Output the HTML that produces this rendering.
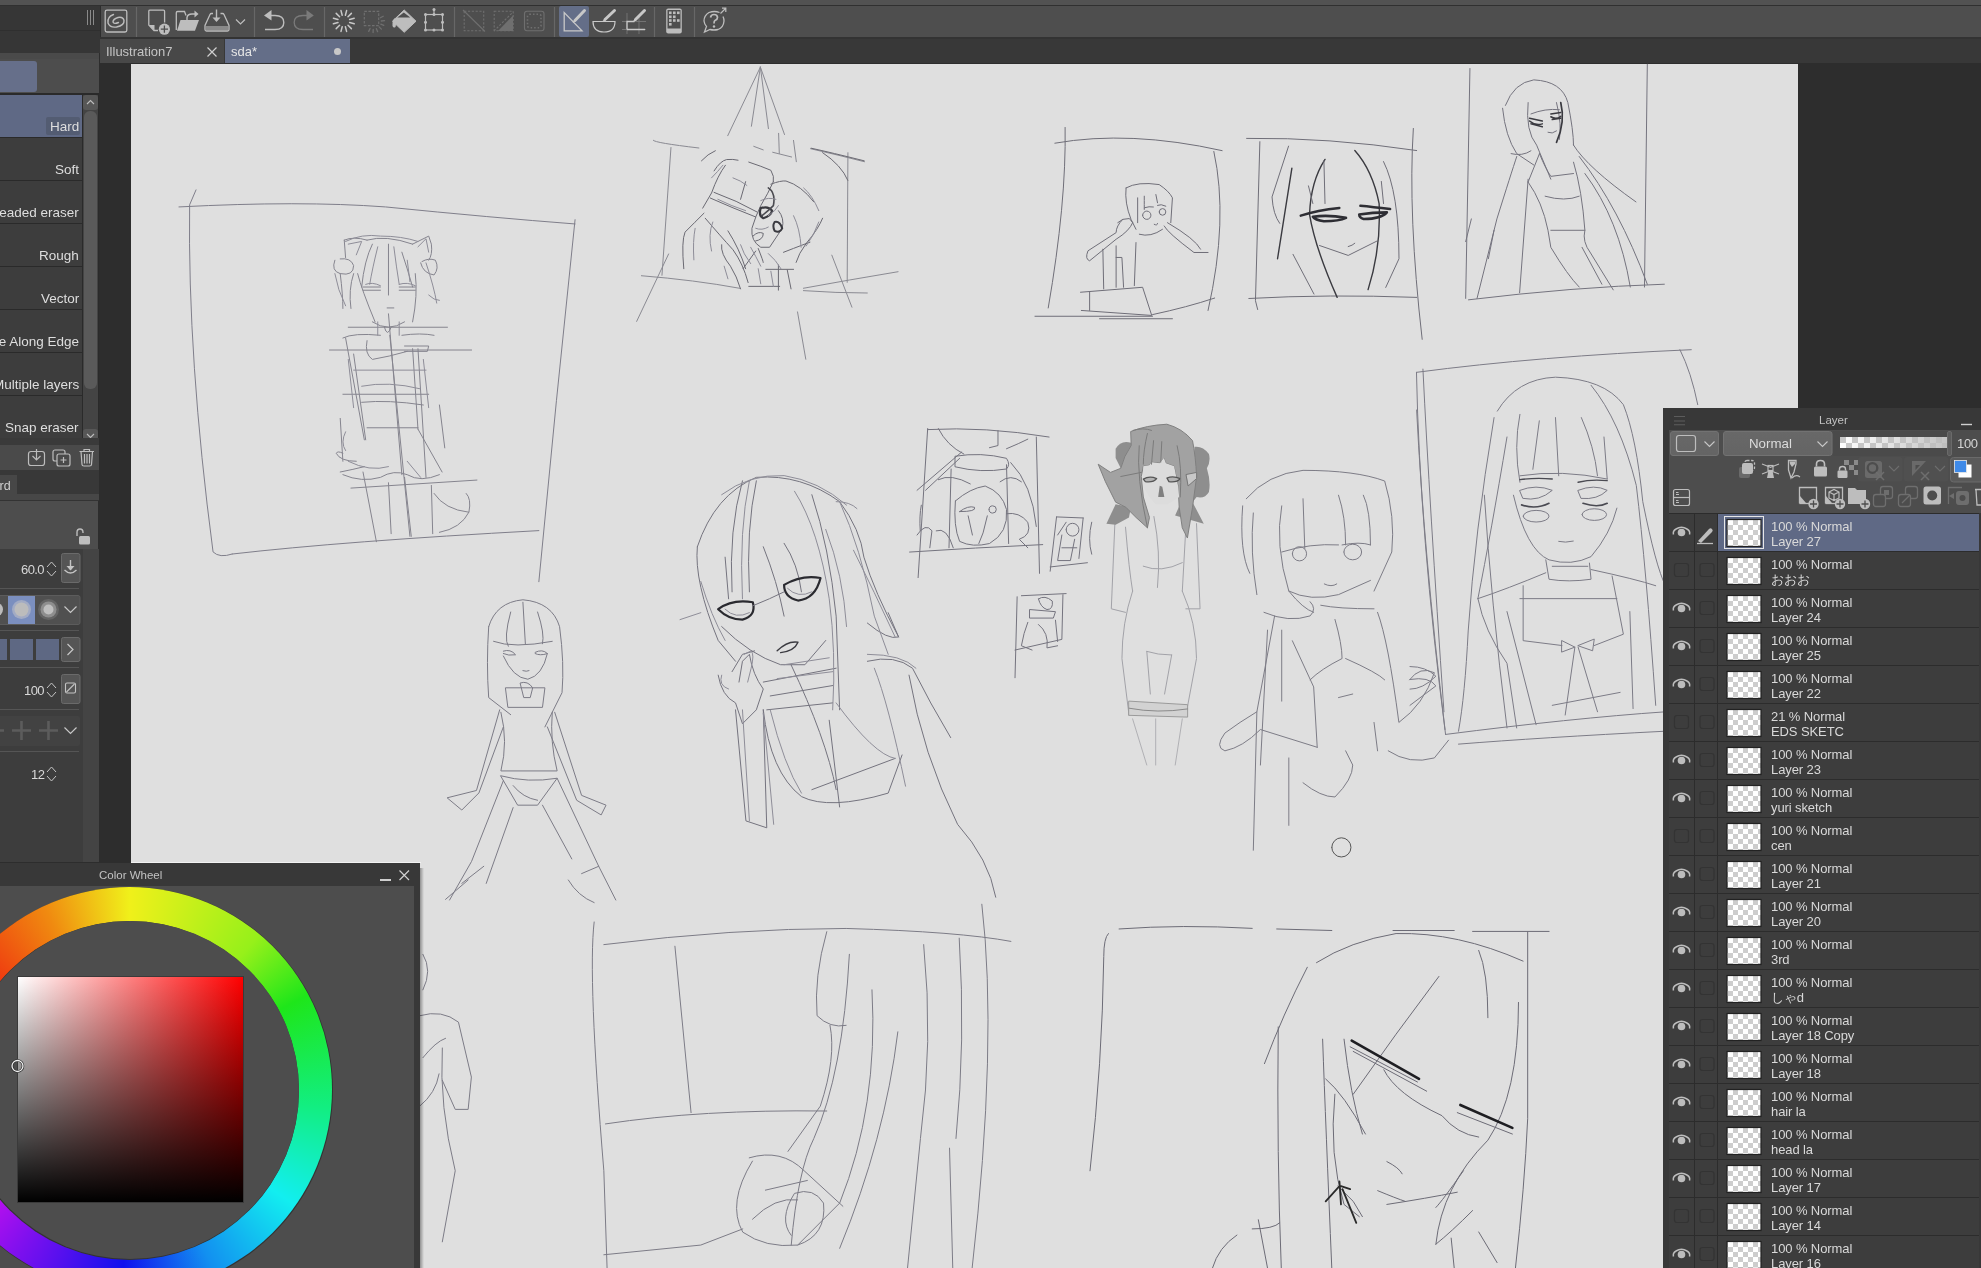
<!DOCTYPE html>
<html><head><meta charset="utf-8">
<style>
*{margin:0;padding:0;box-sizing:border-box}
html,body{width:1981px;height:1268px;overflow:hidden;background:#2d2d2d;font-family:"Liberation Sans",sans-serif;position:relative}
.a{position:absolute}
.t{position:absolute;white-space:nowrap;color:#cfcfcf;font-size:13px;line-height:15px;will-change:transform}
svg{position:absolute;overflow:visible}
</style></head><body>

<!-- top strip -->
<div class="a" style="left:0;top:0;width:1981px;height:6px;background:#525252"></div>
<div class="a" style="left:0;top:5px;width:1981px;height:1px;background:#303030"></div>
<!-- left top area -->
<div class="a" style="left:0;top:6px;width:100px;height:24px;background:#363636"></div>
<div class="a" style="left:0;top:30px;width:100px;height:1px;background:#2f2f2f"></div>
<div class="a" style="left:0;top:31px;width:100px;height:22px;background:#363636"></div>
<div class="a" style="left:0;top:53px;width:99px;height:6px;background:#4a4a4a"></div>
<div class="a" style="left:87px;top:10px;width:1px;height:15px;background:#8a8a8a"></div>
<div class="a" style="left:90px;top:10px;width:1px;height:15px;background:#8a8a8a"></div>
<div class="a" style="left:93px;top:10px;width:1px;height:15px;background:#8a8a8a"></div>
<!-- main toolbar -->
<div class="a" style="left:101px;top:6px;width:1880px;height:31px;background:#4e4e4e"></div>
<div class="a" style="left:100px;top:37px;width:1881px;height:2px;background:#333"></div>
<!-- tab row -->
<div class="a" style="left:100px;top:39px;width:1881px;height:24px;background:#383838"></div>
<div class="a" style="left:100px;top:39px;width:124px;height:24px;background:#484848"></div>
<div class="t" style="left:106px;top:43.5px;font-size:13px;color:#c4c4c4">Illustration7</div>
<svg style="left:205px;top:45px" width="14" height="14"><path d="M2.5 2.5 L11.5 11.5 M11.5 2.5 L2.5 11.5" stroke="#cfcfcf" stroke-width="1.2"/></svg>
<div class="a" style="left:225px;top:39px;width:125px;height:24px;background:#646e88"></div>
<div class="t" style="left:231px;top:43.5px;font-size:13px;color:#e6e6e6">sda*</div>
<div class="a" style="left:334px;top:48px;width:7px;height:7px;border-radius:50%;background:#c8c8c8"></div>


<!-- toolbar icons -->
<svg style="left:0;top:0" width="760" height="40">
 <g stroke="#676767" stroke-width="1.2"><path d="M136.5 7 V37 M254.5 7 V37 M324.5 7 V37 M454.5 7 V37 M554.5 7 V37 M654.5 7 V37 M694.5 7 V37"/></g>
 <rect x="105.2" y="10.2" width="21.6" height="21.8" rx="1.8" fill="none" stroke="#bdbdbd" stroke-width="1.3"/>
 <path d="M113.5 14.5 Q107 17 108 23 Q110 28 116.5 27 Q124.5 25.5 124 20.5 Q123 16.5 118 17.5 Q113 19 113 22 Q114 24.5 118.5 22.5" fill="none" stroke="#bdbdbd" stroke-width="1.4" stroke-linecap="round"/>
 <path d="M148.8 11 Q148.8 10.2 150 10.2 H163.5 Q164.6 10.2 164.6 11.5 V22.5 M148.8 11 V25 L154 30.5 H158" fill="none" stroke="#bdbdbd" stroke-width="1.3"/>
 <path d="M149 25 L154.5 30.5 V25 Z" fill="#bdbdbd"/>
 <circle cx="164.4" cy="29.2" r="5.6" fill="#bdbdbd"/>
 <path d="M164.4 25.6 V32.8 M160.8 29.2 H168" stroke="#4e4e4e" stroke-width="1.3"/>
 <path d="M186 15.5 L184.5 11.5 H177.5 Q176.3 11.5 176.3 12.8 V30" fill="none" stroke="#bdbdbd" stroke-width="1.3"/>
 <path d="M177 30.8 L180.5 20 H199 L195 30.8 Z" fill="#bdbdbd"/>
 <path d="M187 20 V17.5 Q187.5 14 192 14 H195" fill="none" stroke="#bdbdbd" stroke-width="1.4"/>
 <path d="M194.5 10.5 L198.5 14 L194.5 17.5 Z" fill="#bdbdbd"/>
 <path d="M213 13.5 H211.5 Q210.5 13.5 210 14.5 L205 25.5 V29.5 Q205 31 206.5 31 H227.5 Q229 31 229 29.5 V25.5 L224 14.5 Q223.5 13.5 222.5 13.5 H220.5" fill="none" stroke="#bdbdbd" stroke-width="1.3"/>
 <rect x="206" y="26" width="22" height="4" fill="#8a8a8a"/>
 <path d="M216.5 9.5 V21" stroke="#bdbdbd" stroke-width="1.4"/>
 <path d="M212.5 17.5 L216.5 22 L220.5 17.5 Z" fill="#bdbdbd"/>
 <path d="M236 19.5 L240.5 24 L245 19.5" fill="none" stroke="#bdbdbd" stroke-width="1.2"/>
 <path d="M264 15.5 L271.5 10 V20.5 Z" fill="#bdbdbd"/>
 <path d="M270.5 15.5 H275 Q283.8 15.5 283.8 22.5 Q283.8 29.5 275 29.5 H265" fill="none" stroke="#bdbdbd" stroke-width="1.4"/>
 <path d="M313.8 15.5 L306.5 10 V20.5 Z" fill="#7a7a7a"/>
 <path d="M307.5 15.5 H303 Q294.2 15.5 294.2 22.5 Q294.2 29.5 303 29.5 H313" fill="none" stroke="#7a7a7a" stroke-width="1.3"/>
 <path d="M345.4 15.2 L346.6 10.6 M348.0 16.8 L351.4 13.4 M349.6 19.4 L354.2 18.2 M349.6 22.6 L354.2 23.8 M348.0 25.2 L351.4 28.6 M345.4 26.8 L346.6 31.4 M342.2 26.8 L341.0 31.4 M339.6 25.2 L336.2 28.6 M338.0 22.6 L333.4 23.8 M338.0 19.4 L333.4 18.2 M339.6 16.8 L336.2 13.4 M342.2 15.2 L341.0 10.6 " stroke="#c8c8c8" stroke-width="1.5" stroke-linecap="round"/>
 <rect x="364.3" y="11.3" width="14.4" height="14.3" fill="none" stroke="#6f6f6f" stroke-width="1.2" stroke-dasharray="2.6 1.5"/>
 <path d="M380.4 17.8 L383.2 16.3 M381.3 21.0 L384.5 20.7 M380.8 24.2 L383.8 25.3 M379.1 26.9 L381.4 29.1 M376.4 28.7 L377.6 31.7 M373.2 29.3 L373.1 32.5 M370.1 28.5 L368.7 31.4 " stroke="#6f6f6f" stroke-width="1.3" stroke-linecap="round"/>
 <path d="M404.2 10 L416 21.2 L404.2 32.3 L392.5 21.2 Z" fill="#bdbdbd" stroke="#bdbdbd" stroke-width="1" stroke-linejoin="round"/>
 <path d="M403.8 12.4 L397.3 17.6 H410.3 Z" fill="#4e4e4e"/>
 <path d="M395 18 Q392 20 392.5 26 Q393.5 28.5 395.5 27 Q396 25 396.5 22 Z" fill="#bdbdbd"/>
 <rect x="425.5" y="14.5" width="17" height="15.5" fill="none" stroke="#bdbdbd" stroke-width="1.2"/>
 <path d="M434 14.5 V9.5" stroke="#bdbdbd" stroke-width="1.2"/>
 <g fill="#bdbdbd"><circle cx="425.5" cy="14.5" r="1.5"/><circle cx="442.5" cy="14.5" r="1.5"/><circle cx="425.5" cy="30" r="1.5"/><circle cx="442.5" cy="30" r="1.5"/><circle cx="434" cy="14.5" r="1.5"/><circle cx="434" cy="30" r="1.5"/><circle cx="425.5" cy="22.2" r="1.5"/><circle cx="442.5" cy="22.2" r="1.5"/><circle cx="434" cy="9.5" r="1.5"/></g>
 <g stroke="#6f6f6f" stroke-width="1.1" fill="none">
  <rect x="464.2" y="11.3" width="19.5" height="19.5" stroke-dasharray="2.2 1.6"/>
  <path d="M463 10 L485 31.5" stroke-dasharray="none"/>
  <rect x="494.2" y="11.3" width="19" height="19.5" stroke-dasharray="2.2 1.6"/>
  <path d="M494 31 L513 12" stroke-dasharray="2.2 1.6"/>
  <rect x="524.5" y="11.2" width="19.5" height="19.5" rx="2.5"/>
  <rect x="527.5" y="14.2" width="13.5" height="13.5" rx="2" stroke-width="1.6" stroke-dasharray="1.5 2"/>
 </g>
 <path d="M498 31 L513 15.5 V31 Z" fill="#6f6f6f"/>
 <rect x="559" y="6" width="30" height="31" rx="2" fill="#646e88"/>
 <path d="M564.2 12.5 V30.8 H582 Z" fill="none" stroke="#c8c8c8" stroke-width="1.3"/>
 <path d="M575 20.5 L584.5 10.5" stroke="#c8c8c8" stroke-width="3" stroke-linecap="round"/>
 <path d="M575.5 20 L573 22.5" stroke="#c8c8c8" stroke-width="1.2"/>
 <path d="M593 21.5 H615 Q615 32 604 32 Q593 32 593 21.5 Z" fill="none" stroke="#c8c8c8" stroke-width="1.2"/>
 <path d="M605 19.5 L614.5 10.5" stroke="#c8c8c8" stroke-width="3" stroke-linecap="round"/>
 <path d="M605.5 19 L603 21.5" stroke="#c8c8c8" stroke-width="1.2"/>
 <path d="M622 21.5 H646 M622 29.5 H646 M627 13 V34 M639 16 V34" stroke="#777" stroke-width="0.9"/>
 <path d="M627 29.5 V21.5 H634.5 M627 29.5 H645" fill="none" stroke="#c8c8c8" stroke-width="1.3"/>
 <path d="M635.5 19.5 L644.5 10.5" stroke="#c8c8c8" stroke-width="3" stroke-linecap="round"/>
 <path d="M636 19 L633.5 21.5" stroke="#c8c8c8" stroke-width="1.2"/>
 <rect x="666.2" y="8.4" width="15.6" height="25.2" rx="2" fill="#bdbdbd"/>
 <rect x="667.5" y="10" width="13" height="18.5" fill="#4e4e4e"/>
 <g fill="#bdbdbd"><rect x="669" y="11.5" width="2.6" height="2.6"/><rect x="673" y="11.5" width="2.6" height="2.6"/><rect x="677" y="11.5" width="2.6" height="2.6"/><rect x="669" y="15.5" width="2.6" height="2.6"/><rect x="673" y="15.5" width="2.6" height="2.6"/><rect x="669" y="19.2" width="2.6" height="2.6"/><rect x="673" y="19.2" width="2.6" height="2.6"/><rect x="677" y="19.2" width="2.6" height="2.6"/><rect x="669" y="23" width="2.6" height="2.6"/></g>
 <path d="M719.5 12.5 Q714.5 10.5 709 12.5 Q704 15.5 704 21 Q704.5 24.5 706.5 26.5 L704.5 32 L710 29.5 Q714 30.5 718 29.5 Q723.5 27.5 724 21 Q724 18.5 723 16.5" fill="none" stroke="#bdbdbd" stroke-width="1.3"/>
 <path d="M720.5 13.5 L725.5 8.5 M722 8.2 H725.8 V12" fill="none" stroke="#bdbdbd" stroke-width="1.2"/>
 <path d="M710.5 17.5 Q711 14.5 714 14.5 Q717.5 14.5 717.5 17.5 Q717.5 19.5 715 20.5 Q714 21 714 23.5" fill="none" stroke="#bdbdbd" stroke-width="1.7"/>
 <circle cx="714" cy="26.5" r="1.2" fill="#bdbdbd"/>
</svg>

<!-- canvas -->
<div class="a" id="canvas" style="left:131px;top:64px;width:1667px;height:1204px;background:#dfdfdf"></div>

<!-- sketches -->
<svg style="left:0;top:0" width="1981" height="1268" id="sk">
<g transform="translate(130,60) scale(0.42589)" fill="none" stroke="#7e7d8a" stroke-width="1.0" stroke-linecap="round" stroke-linejoin="round">
<path d="M115,345 Q400,330 600,345 Q850,370 1045,385" vector-effect="non-scaling-stroke"/>
<path d="M155,305 L140,340 Q135,700 195,1155 Q210,1170 240,1160" vector-effect="non-scaling-stroke"/>
<path d="M240,1160 Q500,1130 960,1105" vector-effect="non-scaling-stroke"/>
<path d="M1045,375 Q1000,800 960,1225" vector-effect="non-scaling-stroke"/>
</g>
<g transform="translate(300,220) scale(0.26810)" fill="none" stroke="#85848e" stroke-width="1.0" stroke-linecap="round" stroke-linejoin="round">
<path d="M165,75 Q200,60 250,75" vector-effect="non-scaling-stroke"/>
<path d="M165,75 L170,140" vector-effect="non-scaling-stroke"/>
<path d="M250,75 Q320,55 420,90" vector-effect="non-scaling-stroke"/>
<path d="M420,90 L480,60 L490,90 Q495,130 480,150" vector-effect="non-scaling-stroke"/>
<path d="M130,150 Q115,190 150,200 Q200,210 200,170 Q190,140 150,145" vector-effect="non-scaling-stroke"/>
<path d="M450,160 Q460,200 500,205 Q520,180 505,150 Q480,140 455,155" vector-effect="non-scaling-stroke"/>
<path d="M200,200 Q180,260 190,330" vector-effect="non-scaling-stroke"/>
<path d="M150,200 Q160,280 160,330" vector-effect="non-scaling-stroke"/>
<path d="M215,200 Q230,260 280,380" vector-effect="non-scaling-stroke"/>
<path d="M430,200 Q440,280 420,380" vector-effect="non-scaling-stroke"/>
<path d="M270,90 Q240,150 230,250" vector-effect="non-scaling-stroke"/>
<path d="M330,90 L330,280" vector-effect="non-scaling-stroke"/>
<path d="M380,120 Q400,180 420,250" vector-effect="non-scaling-stroke"/>
<path d="M235,250 H300" vector-effect="non-scaling-stroke"/>
<path d="M370,250 H430" vector-effect="non-scaling-stroke"/>
<path d="M235,262 L300,262" vector-effect="non-scaling-stroke"/>
<path d="M370,262 L430,262" vector-effect="non-scaling-stroke"/>
<path d="M325,328 H350" vector-effect="non-scaling-stroke"/>
<path d="M270,380 Q330,420 390,380" vector-effect="non-scaling-stroke"/>
<path d="M315,400 Q325,440 340,400" vector-effect="non-scaling-stroke"/>
<path d="M160,440 Q200,420 300,430" vector-effect="non-scaling-stroke"/>
<path d="M380,430 Q450,420 500,430" vector-effect="non-scaling-stroke"/>
<path d="M110,485 H640" vector-effect="non-scaling-stroke"/>
<path d="M160,650 H480" vector-effect="non-scaling-stroke"/>
<path d="M230,680 Q330,670 460,690" vector-effect="non-scaling-stroke"/>
<path d="M250,775 H440" vector-effect="non-scaling-stroke"/>
<path d="M180,400 H550" vector-effect="non-scaling-stroke"/>
<path d="M170,440 L240,820" vector-effect="non-scaling-stroke"/>
<path d="M440,480 L470,960" vector-effect="non-scaling-stroke"/>
<path d="M200,500 L245,820" vector-effect="non-scaling-stroke"/>
<path d="M420,480 L440,780" vector-effect="non-scaling-stroke"/>
<path d="M330,350 L380,950" vector-effect="non-scaling-stroke"/>
<path d="M335,430 L410,1180" vector-effect="non-scaling-stroke"/>
<path d="M250,450 Q240,500 270,520 Q330,510 400,490" vector-effect="non-scaling-stroke"/>
<path d="M390,470 H480 L475,490 H390" vector-effect="non-scaling-stroke"/>
<path d="M160,870 Q140,860 135,870 Q150,900 210,900" vector-effect="non-scaling-stroke"/>
<path d="M150,940 Q200,930 240,920" vector-effect="non-scaling-stroke"/>
<path d="M160,950 Q230,980 300,960 Q350,930 400,950 Q450,980 520,950" vector-effect="non-scaling-stroke"/>
<path d="M150,740 L160,900" vector-effect="non-scaling-stroke"/>
<path d="M440,780 L530,940" vector-effect="non-scaling-stroke"/>
<path d="M520,690 L540,850" vector-effect="non-scaling-stroke"/>
<path d="M190,1000 L660,970" vector-effect="non-scaling-stroke"/>
<path d="M235,940 L285,1200" vector-effect="non-scaling-stroke"/>
<path d="M330,980 L340,1170" vector-effect="non-scaling-stroke"/>
<path d="M390,960 L415,1180" vector-effect="non-scaling-stroke"/>
<path d="M490,990 L495,1170" vector-effect="non-scaling-stroke"/>
<path d="M500,1020 Q540,1080 630,1090 Q640,1040 620,1020" vector-effect="non-scaling-stroke"/>
<path d="M630,1090 Q600,1150 520,1165" vector-effect="non-scaling-stroke"/>
</g>
<g transform="translate(600,60) scale(0.23655)" fill="none" stroke="#8a8a92" stroke-width="1.0" stroke-linecap="round" stroke-linejoin="round">
<path d="M678,30 L540,320" vector-effect="non-scaling-stroke"/>
<path d="M678,30 L640,280" vector-effect="non-scaling-stroke"/>
<path d="M678,30 L712,290" vector-effect="non-scaling-stroke"/>
<path d="M678,30 L780,315" vector-effect="non-scaling-stroke"/>
<path d="M225,340 Q230,350 418,372" vector-effect="non-scaling-stroke"/>
<path d="M300,370 L262,910" vector-effect="non-scaling-stroke"/>
<path d="M175,912 Q400,930 590,965" vector-effect="non-scaling-stroke"/>
<path d="M1048,392 L1045,940" vector-effect="non-scaling-stroke"/>
<path d="M890,375 Q1000,400 1118,430" vector-effect="non-scaling-stroke"/>
<path d="M860,965 Q1050,930 1260,895" vector-effect="non-scaling-stroke"/>
<path d="M860,975 Q1000,985 1130,985" vector-effect="non-scaling-stroke"/>
<path d="M290,820 L155,1105" vector-effect="non-scaling-stroke"/>
<path d="M980,825 L1065,1045" vector-effect="non-scaling-stroke"/>
<path d="M835,1065 L870,1265" vector-effect="non-scaling-stroke"/>
<path d="M650,365 L690,380" vector-effect="non-scaling-stroke"/>
<path d="M730,390 L810,410" vector-effect="non-scaling-stroke"/>
<path d="M755,310 L758,395" vector-effect="non-scaling-stroke"/>
<path d="M818,340 L830,430" vector-effect="non-scaling-stroke"/>
</g>
<g transform="translate(680,140) scale(0.12618)" fill="none" stroke="#6a6972" stroke-width="1.0" stroke-linecap="round" stroke-linejoin="round">
<path d="M170,165 Q220,110 280,85" vector-effect="non-scaling-stroke"/>
<path d="M270,245 Q320,165 370,155 Q420,150 460,160" vector-effect="non-scaling-stroke"/>
<path d="M360,200 Q300,280 250,420 L180,540" vector-effect="non-scaling-stroke"/>
<path d="M545,175 Q650,210 720,240 Q750,290 740,330" vector-effect="non-scaling-stroke"/>
<path d="M270,415 Q450,480 610,570" vector-effect="non-scaling-stroke"/>
<path d="M240,460 Q420,540 600,610" vector-effect="non-scaling-stroke"/>
<path d="M520,330 L480,470" vector-effect="non-scaling-stroke"/>
<path d="M740,330 Q700,420 640,520 Q600,600 570,700 Q560,800 640,850 L710,850 L810,700 Q830,620 780,560" vector-effect="non-scaling-stroke"/>
<path d="M720,350 Q800,320 840,325 Q960,360 1060,490" vector-effect="non-scaling-stroke"/>
<path d="M640,540 Q700,520 730,560 Q720,600 660,620 Q620,600 640,540" stroke-width="2.2" stroke="#3a3a40" vector-effect="non-scaling-stroke"/>
<path d="M750,650 Q790,640 810,700 Q790,740 750,720 Q730,680 750,650" stroke-width="2" stroke="#3a3a40" vector-effect="non-scaling-stroke"/>
<path d="M700,380 Q760,420 740,520 Q700,560 650,600" stroke-width="1.6" stroke="#4a4a50" vector-effect="non-scaling-stroke"/>
<path d="M580,760 Q620,720 660,740 Q660,790 600,800" vector-effect="non-scaling-stroke"/>
<path d="M620,860 Q660,960 660,970" vector-effect="non-scaling-stroke"/>
<path d="M820,890 Q1000,820 1030,810" vector-effect="non-scaling-stroke"/>
<path d="M1130,620 Q1100,700 1000,820 Q940,900 920,970" vector-effect="non-scaling-stroke"/>
<path d="M190,580 Q120,650 40,730 Q10,800 30,1020" vector-effect="non-scaling-stroke"/>
<path d="M200,620 Q320,760 420,870 Q500,980 540,1130" vector-effect="non-scaling-stroke"/>
<path d="M330,830 Q320,900 400,1000 Q450,1080 480,1180" vector-effect="non-scaling-stroke"/>
<path d="M380,720 Q470,860 520,1020" vector-effect="non-scaling-stroke"/>
<path d="M600,880 L500,1020" vector-effect="non-scaling-stroke"/>
<path d="M545,1160 L790,1160" vector-effect="non-scaling-stroke"/>
<path d="M780,990 L780,1190" vector-effect="non-scaling-stroke"/>
<path d="M680,1025 L900,1025" vector-effect="non-scaling-stroke"/>
<path d="M850,1030 L880,1180" vector-effect="non-scaling-stroke"/>
<path d="M1040,65 Q1200,100 1460,165" vector-effect="non-scaling-stroke"/>
<path d="M1130,100 Q1280,200 1330,320" vector-effect="non-scaling-stroke"/>
</g>
<g transform="translate(1030,120) scale(0.16562)" fill="none" stroke="#6f6e78" stroke-width="1.0" stroke-linecap="round" stroke-linejoin="round">
<path d="M150,140 Q600,60 1160,185" vector-effect="non-scaling-stroke"/>
<path d="M212,45 Q220,500 110,1135" vector-effect="non-scaling-stroke"/>
<path d="M1110,190 Q1200,600 1075,1150" vector-effect="non-scaling-stroke"/>
<path d="M740,1175 Q950,1130 1115,1075" vector-effect="non-scaling-stroke"/>
<path d="M30,1185 L740,1185" vector-effect="non-scaling-stroke"/>
<path d="M580,410 Q650,370 780,390 Q840,430 860,470 L850,620" vector-effect="non-scaling-stroke"/>
<path d="M580,410 Q570,500 610,600 L640,660" vector-effect="non-scaling-stroke"/>
<path d="M650,470 L650,620" vector-effect="non-scaling-stroke"/>
<path d="M690,460 Q690,520 690,540" vector-effect="non-scaling-stroke"/>
<path d="M760,450 L770,500" vector-effect="non-scaling-stroke"/>
<path d="M680,575 a25,25 0 1,0 50,0 a25,25 0 1,0 -50,0" vector-effect="non-scaling-stroke"/>
<path d="M780,555 a20,20 0 1,0 40,0 a20,20 0 1,0 -40,0" vector-effect="non-scaling-stroke"/>
<path d="M690,530 Q720,520 745,525" vector-effect="non-scaling-stroke"/>
<path d="M770,515 Q790,505 820,520" vector-effect="non-scaling-stroke"/>
<path d="M750,630 Q770,640 770,625" vector-effect="non-scaling-stroke"/>
<path d="M560,600 Q520,640 520,680 L350,790 Q330,840 360,850 L520,720 Q600,670 620,620" vector-effect="non-scaling-stroke"/>
<path d="M530,620 L560,600 L600,595 L620,620" vector-effect="non-scaling-stroke"/>
<path d="M810,640 Q830,680 990,800 L1075,800" vector-effect="non-scaling-stroke"/>
<path d="M830,620 Q1000,720 1030,780" vector-effect="non-scaling-stroke"/>
<path d="M440,780 L445,1020" vector-effect="non-scaling-stroke"/>
<path d="M520,760 L520,1010" vector-effect="non-scaling-stroke"/>
<path d="M640,740 L630,1000" vector-effect="non-scaling-stroke"/>
<path d="M520,830 H555 L565,1010" vector-effect="non-scaling-stroke"/>
<path d="M660,690 Q730,710 800,660" vector-effect="non-scaling-stroke"/>
<path d="M305,1040 L680,1010 L735,1180 L310,1150" vector-effect="non-scaling-stroke"/>
<path d="M360,1040 L360,1150" vector-effect="non-scaling-stroke"/>
<path d="M420,1200 L860,1200" vector-effect="non-scaling-stroke"/>
</g>
<g transform="translate(1240,60) scale(0.22082)" fill="none" stroke="#6f6e78" stroke-width="1.0" stroke-linecap="round" stroke-linejoin="round">
<path d="M30,355 Q400,350 800,410" vector-effect="non-scaling-stroke"/>
<path d="M90,370 L70,1090 L80,1130" vector-effect="non-scaling-stroke"/>
<path d="M40,1080 Q400,1060 800,1075" vector-effect="non-scaling-stroke"/>
<path d="M785,310 Q760,700 825,1265" vector-effect="non-scaling-stroke"/>
<path d="M220,390 L145,620 Q150,700 180,740" vector-effect="non-scaling-stroke"/>
<path d="M235,490 L170,900" stroke="#3a3a40" stroke-width="1.4" vector-effect="non-scaling-stroke"/>
<path d="M385,450 Q320,550 315,700 Q340,850 440,1075" stroke="#3a3a40" stroke-width="1.4" vector-effect="non-scaling-stroke"/>
<path d="M520,410 Q600,500 630,650 Q640,850 580,1040" stroke="#3a3a40" stroke-width="1.4" vector-effect="non-scaling-stroke"/>
<path d="M650,460 Q720,600 720,900 L660,1030" vector-effect="non-scaling-stroke"/>
<path d="M240,880 L335,1060" vector-effect="non-scaling-stroke"/>
<path d="M310,570 L330,650" vector-effect="non-scaling-stroke"/>
<path d="M640,550 L650,650" vector-effect="non-scaling-stroke"/>
<path d="M380,455 L385,650" vector-effect="non-scaling-stroke"/>
<path d="M275,705 Q350,680 450,670" stroke-width="2.4" stroke="#2e2e34" vector-effect="non-scaling-stroke"/>
<path d="M330,710 Q400,700 480,715 Q450,730 380,730 Q340,725 330,710" stroke-width="2.6" stroke="#2e2e34" vector-effect="non-scaling-stroke"/>
<path d="M545,660 Q600,665 680,675" stroke-width="2.4" stroke="#2e2e34" vector-effect="non-scaling-stroke"/>
<path d="M540,700 Q600,690 665,690 Q640,720 560,720 Q540,715 540,700" stroke-width="2.6" stroke="#2e2e34" vector-effect="non-scaling-stroke"/>
<path d="M360,840 L490,885 L620,820" vector-effect="non-scaling-stroke"/>
<path d="M490,845 Q510,840 520,830" vector-effect="non-scaling-stroke"/>
</g>
<g transform="translate(1410,340) scale(0.32330)" fill="none" stroke="#7c7b86" stroke-width="1.0" stroke-linecap="round" stroke-linejoin="round">
<path d="M20,100 Q400,50 870,30" vector-effect="non-scaling-stroke"/>
<path d="M20,100 Q30,600 110,1220" vector-effect="non-scaling-stroke"/>
<path d="M40,90 Q60,500 105,1150" vector-effect="non-scaling-stroke"/>
<path d="M835,30 Q870,100 890,200" vector-effect="non-scaling-stroke"/>
<path d="M110,1220 Q500,1170 790,1150" vector-effect="non-scaling-stroke"/>
<path d="M150,1250 Q400,1230 790,1210" vector-effect="non-scaling-stroke"/>
<path d="M270,220 Q330,120 450,115 Q600,120 660,200 Q700,300 720,500 Q760,700 790,760" vector-effect="non-scaling-stroke"/>
<path d="M260,240 Q200,600 180,900 Q170,1100 150,1210" vector-effect="non-scaling-stroke"/>
<path d="M300,300 Q250,600 210,800" vector-effect="non-scaling-stroke"/>
<path d="M230,480 Q250,800 300,1200" vector-effect="non-scaling-stroke"/>
<path d="M560,140 Q650,250 700,450 Q730,700 760,1130" vector-effect="non-scaling-stroke"/>
<path d="M340,230 Q320,330 340,440" vector-effect="non-scaling-stroke"/>
<path d="M400,250 L380,400" vector-effect="non-scaling-stroke"/>
<path d="M450,240 L460,420" vector-effect="non-scaling-stroke"/>
<path d="M530,240 Q570,330 580,420" vector-effect="non-scaling-stroke"/>
<path d="M600,300 L610,430" vector-effect="non-scaling-stroke"/>
<path d="M340,420 Q470,400 610,430" vector-effect="non-scaling-stroke"/>
<path d="M320,480 Q360,650 430,680 Q500,700 560,670 Q620,600 640,520" vector-effect="non-scaling-stroke"/>
<path d="M340,465 Q390,445 440,465 Q400,500 350,490 Z" vector-effect="non-scaling-stroke"/>
<path d="M520,465 Q570,445 610,465 Q580,495 530,490 Z" vector-effect="non-scaling-stroke"/>
<path d="M345,510 Q390,525 430,505" stroke-width="1.6" stroke="#4a4a52" vector-effect="non-scaling-stroke"/>
<path d="M535,505 Q580,520 610,505" stroke-width="1.6" stroke="#4a4a52" vector-effect="non-scaling-stroke"/>
<path d="M340,432 Q390,425 440,430" stroke-width="1.4" stroke="#4a4a52" vector-effect="non-scaling-stroke"/>
<path d="M520,440 Q560,430 610,435" stroke-width="1.4" stroke="#4a4a52" vector-effect="non-scaling-stroke"/>
<path d="M350,545 a40,18 0 1,0 80,0 a40,18 0 1,0 -80,0" vector-effect="non-scaling-stroke"/>
<path d="M532,540 a38,18 0 1,0 76,0 a38,18 0 1,0 -76,0" vector-effect="non-scaling-stroke"/>
<path d="M460,623 Q480,628 505,622" vector-effect="non-scaling-stroke"/>
<path d="M420,680 L430,740 Q490,750 560,740 L555,690" vector-effect="non-scaling-stroke"/>
<path d="M440,700 H550" vector-effect="non-scaling-stroke"/>
<path d="M210,800 Q300,770 420,720" vector-effect="non-scaling-stroke"/>
<path d="M560,710 Q700,740 760,760" vector-effect="non-scaling-stroke"/>
<path d="M210,800 Q230,900 300,1000 L330,1200" vector-effect="non-scaling-stroke"/>
<path d="M350,760 L350,930 L470,945" vector-effect="non-scaling-stroke"/>
<path d="M625,730 L660,910 L570,945" vector-effect="non-scaling-stroke"/>
<path d="M340,800 H640" vector-effect="non-scaling-stroke"/>
<path d="M300,840 L390,1190" vector-effect="non-scaling-stroke"/>
<path d="M680,840 L690,1140" vector-effect="non-scaling-stroke"/>
<path d="M470,930 L510,950 L470,965 Z" vector-effect="non-scaling-stroke"/>
<path d="M520,945 L570,925 L565,960 Z" vector-effect="non-scaling-stroke"/>
<path d="M510,950 L480,1160" vector-effect="non-scaling-stroke"/>
<path d="M520,950 L580,1150" vector-effect="non-scaling-stroke"/>
<path d="M440,1130 L650,1090" vector-effect="non-scaling-stroke"/>
<path d="M0,1010 Q50,1010 80,1040 Q40,1080 0,1080" vector-effect="non-scaling-stroke"/>
<path d="M0,1050 Q60,1040 80,1070 L0,1130" vector-effect="non-scaling-stroke"/>
</g>
<g transform="translate(1090,410) scale(0.35503)" fill="none" stroke="#7c7b86" stroke-width="1.0" stroke-linecap="round" stroke-linejoin="round">
<path d="M70,320 L60,560 L100,570" stroke="#a2a2a8" vector-effect="non-scaling-stroke"/>
<path d="M300,320 L310,560 L270,560" stroke="#a2a2a8" vector-effect="non-scaling-stroke"/>
<path d="M100,330 Q110,450 120,510" stroke="#a2a2a8" vector-effect="non-scaling-stroke"/>
<path d="M270,330 L260,510" stroke="#a2a2a8" vector-effect="non-scaling-stroke"/>
<path d="M120,510 Q90,600 90,700 L110,860" stroke="#a2a2a8" vector-effect="non-scaling-stroke"/>
<path d="M260,510 Q300,600 300,700 L270,860" stroke="#a2a2a8" vector-effect="non-scaling-stroke"/>
<path d="M160,680 L170,800" stroke="#a2a2a8" vector-effect="non-scaling-stroke"/>
<path d="M230,690 L210,800" stroke="#a2a2a8" vector-effect="non-scaling-stroke"/>
<path d="M160,680 Q190,690 230,690" stroke="#a2a2a8" vector-effect="non-scaling-stroke"/>
<path d="M180,300 Q200,400 190,500 M150,440 Q200,460 260,430" stroke="#a2a2a8" vector-effect="non-scaling-stroke"/>
<path d="M110,820 L275,830 L275,865 L110,860 Z" fill="#d2d2d2" stroke="#9a9a9a" vector-effect="non-scaling-stroke"/>
<path d="M110,840 Q190,855 275,842" stroke="#8a8a8a" vector-effect="non-scaling-stroke"/>
<path d="M120,870 L160,1000" stroke="#b0b0b4" vector-effect="non-scaling-stroke"/>
<path d="M260,870 L240,1000" stroke="#b0b0b4" vector-effect="non-scaling-stroke"/>
<path d="M185,870 L185,1000" stroke="#b0b0b4" vector-effect="non-scaling-stroke"/>
<path d="M440,250 Q500,180 600,170 Q750,170 830,200 Q860,300 850,400 L800,510" vector-effect="non-scaling-stroke"/>
<path d="M430,270 Q420,400 450,460" vector-effect="non-scaling-stroke"/>
<path d="M460,290 Q450,400 470,520" vector-effect="non-scaling-stroke"/>
<path d="M540,270 Q520,380 560,510 Q600,560 630,570" vector-effect="non-scaling-stroke"/>
<path d="M600,250 L605,390" vector-effect="non-scaling-stroke"/>
<path d="M700,240 Q720,300 720,380" vector-effect="non-scaling-stroke"/>
<path d="M770,240 Q790,280 790,380" vector-effect="non-scaling-stroke"/>
<path d="M570,405 a20,20 0 1,0 40,0 a20,20 0 1,0 -40,0" vector-effect="non-scaling-stroke"/>
<path d="M715,400 a25,22 0 1,0 50,0 a25,22 0 1,0 -50,0" vector-effect="non-scaling-stroke"/>
<path d="M540,400 Q620,375 700,380" vector-effect="non-scaling-stroke"/>
<path d="M710,380 Q760,370 790,380" vector-effect="non-scaling-stroke"/>
<path d="M660,490 Q680,500 695,490" vector-effect="non-scaling-stroke"/>
<path d="M560,510 Q620,540 700,520 L790,480" vector-effect="non-scaling-stroke"/>
<path d="M490,570 Q560,600 620,580 Q640,560 620,540" vector-effect="non-scaling-stroke"/>
<path d="M650,550 Q700,560 800,560" vector-effect="non-scaling-stroke"/>
<path d="M520,580 L470,850 L460,1240" vector-effect="non-scaling-stroke"/>
<path d="M500,620 L480,1000" vector-effect="non-scaling-stroke"/>
<path d="M540,620 L540,820" vector-effect="non-scaling-stroke"/>
<path d="M570,650 L630,780 L640,950" vector-effect="non-scaling-stroke"/>
<path d="M690,590 Q710,660 710,700 Q650,730 620,760" vector-effect="non-scaling-stroke"/>
<path d="M720,700 Q810,740 830,760" vector-effect="non-scaling-stroke"/>
<path d="M810,570 Q840,650 870,880 Q940,830 970,740 Q930,720 900,760" vector-effect="non-scaling-stroke"/>
<path d="M700,810 L740,800" vector-effect="non-scaling-stroke"/>
<path d="M470,850 Q420,880 380,910 Q350,950 380,960 Q430,950 480,900 L640,950" vector-effect="non-scaling-stroke"/>
<path d="M560,980 L560,1170" vector-effect="non-scaling-stroke"/>
<path d="M600,1050 Q650,1090 690,1090 Q740,1040 740,1000 L720,960" vector-effect="non-scaling-stroke"/>
<path d="M840,960 Q900,1000 970,980 L1010,930" vector-effect="non-scaling-stroke"/>
<path d="M800,880 L810,960" vector-effect="non-scaling-stroke"/>
<path d="M920,0 Q940,400 1000,900" vector-effect="non-scaling-stroke"/>
<path d="M681,1232 a27,27 0 1,0 54,0 a27,27 0 1,0 -54,0" stroke="#555" vector-effect="non-scaling-stroke"/>
</g>
<g transform="translate(1090,415) scale(0.10252)" fill="none" stroke="#7c7b86" stroke-width="1.0" stroke-linecap="round" stroke-linejoin="round">
<path d="M250,330 Q300,240 400,270 L420,300 L300,520 L250,420 Z" fill="#8e8e8e" stroke="none" vector-effect="non-scaling-stroke"/>
<path d="M160,1060 L250,870 L400,900 L380,1000 L250,1070 Z" fill="#8e8e8e" stroke="none" vector-effect="non-scaling-stroke"/>
<path d="M1020,310 Q1100,300 1160,380 Q1180,450 1140,520 Q1180,650 1160,750 Q1120,820 1040,800 L1000,850 L1110,1060 L830,980 L1000,600 Z" fill="#8e8e8e" stroke="none" vector-effect="non-scaling-stroke"/>
<path d="M400,160 Q550,100 750,90 Q900,130 1000,250 Q1030,400 1040,600 L1000,900 L950,1200 L900,1100 L870,900 L860,700 L820,500 L740,470 L720,420 L680,470 L600,460 L580,490 L520,500 L500,600 L520,800 L580,1000 L560,1100 L450,1000 L350,900 L250,850 L150,650 L80,480 L200,560 L300,520 Q330,400 400,300 Z" fill="#a2a2a2" stroke="#808080" vector-effect="non-scaling-stroke"/>
<path d="M520,500 L580,490 L600,460 L680,470 L720,420 L740,470 L820,500 L860,700 L870,800 L760,870 L640,870 L580,800 L520,700 Z" fill="#dcdcdc" stroke="none" vector-effect="non-scaling-stroke"/>
<path d="M520,625 Q580,590 650,620 Q620,660 540,650 Z" fill="#b4b4b4" stroke="#555" stroke-width="1.3" vector-effect="non-scaling-stroke"/>
<path d="M750,615 Q810,590 880,620 Q850,660 770,650 Z" fill="#b4b4b4" stroke="#555" stroke-width="1.3" vector-effect="non-scaling-stroke"/>
<path d="M680,690 L705,700 L725,800 L665,800 Z" fill="#808080" stroke="none" vector-effect="non-scaling-stroke"/>
<path d="M940,580 L1040,560 L1040,620 L960,690 Z" fill="#c8c8c8" stroke="#777" vector-effect="non-scaling-stroke"/>
<path d="M620,250 L600,480 M700,260 L690,460 M850,300 Q900,500 880,800 M480,300 Q450,600 560,1100 M300,600 Q400,580 500,560 M560,180 Q520,350 520,480 M420,150 Q520,120 600,150" stroke="#7a7a7a" vector-effect="non-scaling-stroke"/>
</g>
<g transform="translate(900,420) scale(0.21299)" fill="none" stroke="#74737e" stroke-width="1.0" stroke-linecap="round" stroke-linejoin="round">
<path d="M130,40 L85,740" vector-effect="non-scaling-stroke"/>
<path d="M130,45 Q400,30 700,80" vector-effect="non-scaling-stroke"/>
<path d="M640,80 L655,720" vector-effect="non-scaling-stroke"/>
<path d="M45,620 Q350,600 670,585" vector-effect="non-scaling-stroke"/>
<path d="M180,40 Q220,120 300,160" vector-effect="non-scaling-stroke"/>
<path d="M600,90 Q560,110 500,135" vector-effect="non-scaling-stroke"/>
<path d="M460,50 L460,120 L420,130" vector-effect="non-scaling-stroke"/>
<path d="M80,330 L290,150" vector-effect="non-scaling-stroke"/>
<path d="M120,330 L280,180" vector-effect="non-scaling-stroke"/>
<path d="M260,170 Q380,150 500,180 Q520,210 500,230 Q380,250 260,220 Z" vector-effect="non-scaling-stroke"/>
<path d="M180,280 Q240,250 330,300" vector-effect="non-scaling-stroke"/>
<path d="M470,290 Q520,250 570,290" vector-effect="non-scaling-stroke"/>
<path d="M260,380 Q330,320 400,310 Q480,340 500,420 Q510,530 420,580 Q340,600 280,570 Q250,500 260,380" vector-effect="non-scaling-stroke"/>
<path d="M280,430 Q320,400 350,410 Q360,430 280,430" vector-effect="non-scaling-stroke"/>
<path d="M418,420 a17,17 0 1,0 34,0 a17,17 0 1,0 -34,0" vector-effect="non-scaling-stroke"/>
<path d="M320,450 L340,540" vector-effect="non-scaling-stroke"/>
<path d="M410,450 L390,530 L370,580" vector-effect="non-scaling-stroke"/>
<path d="M80,540 Q120,480 150,520 L140,600" vector-effect="non-scaling-stroke"/>
<path d="M170,520 Q220,500 250,600" vector-effect="non-scaling-stroke"/>
<path d="M500,440 Q560,430 600,480 Q620,540 560,560 L600,600" vector-effect="non-scaling-stroke"/>
<path d="M100,400 Q90,450 95,520" vector-effect="non-scaling-stroke"/>
<path d="M520,200 Q620,300 640,500" vector-effect="non-scaling-stroke"/>
<path d="M240,230 L230,600" vector-effect="non-scaling-stroke"/>
<path d="M500,210 L510,580" vector-effect="non-scaling-stroke"/>
<path d="M735,455 L705,710" vector-effect="non-scaling-stroke"/>
<path d="M735,455 L860,460" vector-effect="non-scaling-stroke"/>
<path d="M705,690 L880,670" vector-effect="non-scaling-stroke"/>
<path d="M860,460 L840,650" vector-effect="non-scaling-stroke"/>
<path d="M780,515 a30,30 0 1,0 60,0 a30,30 0 1,0 -60,0" vector-effect="non-scaling-stroke"/>
<path d="M760,540 L740,660 L800,660 L820,560" vector-effect="non-scaling-stroke"/>
<path d="M780,480 L740,540" vector-effect="non-scaling-stroke"/>
<path d="M760,600 L830,600" vector-effect="non-scaling-stroke"/>
<path d="M900,480 Q880,560 900,630" vector-effect="non-scaling-stroke"/>
<path d="M550,830 L540,1210" vector-effect="non-scaling-stroke"/>
<path d="M570,825 L780,815" vector-effect="non-scaling-stroke"/>
<path d="M765,820 L760,1030 L540,1080" vector-effect="non-scaling-stroke"/>
<path d="M650,840 Q680,820 715,850 Q720,890 690,890 Q660,880 650,840" vector-effect="non-scaling-stroke"/>
<path d="M610,890 L730,900 L720,930 L610,930 Z" vector-effect="non-scaling-stroke"/>
<path d="M600,950 Q580,1000 570,1060 L620,1080" vector-effect="non-scaling-stroke"/>
<path d="M650,960 Q700,1000 690,1070 L740,1060" vector-effect="non-scaling-stroke"/>
<path d="M730,940 L740,1040" vector-effect="non-scaling-stroke"/>
</g>
<g transform="translate(680,460) scale(0.34700)" fill="none" stroke="#74737e" stroke-width="1.0" stroke-linecap="round" stroke-linejoin="round">
<path d="M50,250 Q100,100 220,50 Q350,40 460,120 Q520,200 530,280 Q560,380 630,510" vector-effect="non-scaling-stroke"/>
<path d="M50,250 Q40,350 110,520 L160,580" vector-effect="non-scaling-stroke"/>
<path d="M180,60 Q140,200 150,380" vector-effect="non-scaling-stroke"/>
<path d="M220,60 Q190,200 200,380" vector-effect="non-scaling-stroke"/>
<path d="M380,100 Q430,250 450,450 L460,720" vector-effect="non-scaling-stroke"/>
<path d="M130,280 L140,400" vector-effect="non-scaling-stroke"/>
<path d="M240,250 Q280,350 300,450" vector-effect="non-scaling-stroke"/>
<path d="M300,240 Q340,300 350,380" vector-effect="non-scaling-stroke"/>
<path d="M110,430 Q150,400 210,410 Q220,450 180,460 Q140,460 110,430" stroke-width="2.2" stroke="#2a2a30" vector-effect="non-scaling-stroke"/>
<path d="M300,360 Q350,330 405,340 Q390,400 340,405 Q300,395 300,360" stroke-width="2.2" stroke="#2a2a30" vector-effect="non-scaling-stroke"/>
<path d="M210,420 Q260,400 300,380" vector-effect="non-scaling-stroke"/>
<path d="M280,550 Q310,520 340,525 Q330,550 290,555" stroke-width="1.4" stroke="#3a3a40" vector-effect="non-scaling-stroke"/>
<path d="M120,480 Q200,560 290,590 L360,590 L420,520" vector-effect="non-scaling-stroke"/>
<path d="M110,620 Q120,680 160,700 L180,760 L220,720 L240,660 Q210,620 200,560 L180,580 L170,640" vector-effect="non-scaling-stroke"/>
<path d="M150,610 L180,560 L215,550" vector-effect="non-scaling-stroke"/>
<path d="M160,720 L190,1040 L250,1060 L240,720" vector-effect="non-scaling-stroke"/>
<path d="M240,640 L450,600" vector-effect="non-scaling-stroke"/>
<path d="M260,680 L440,650" vector-effect="non-scaling-stroke"/>
<path d="M250,720 L440,700" vector-effect="non-scaling-stroke"/>
<path d="M240,720 Q260,900 350,970 Q430,1010 600,960 L640,850" vector-effect="non-scaling-stroke"/>
<path d="M380,950 L620,860" vector-effect="non-scaling-stroke"/>
<path d="M540,580 Q620,560 670,600 Q720,700 780,800" vector-effect="non-scaling-stroke"/>
<path d="M660,620 Q700,850 800,1050 Q890,1150 910,1260" vector-effect="non-scaling-stroke"/>
<path d="M430,750 L460,1000" vector-effect="non-scaling-stroke"/>
<path d="M320,590 Q420,800 450,950" vector-effect="non-scaling-stroke"/>
<path d="M540,470 Q600,520 630,510 L600,440" vector-effect="non-scaling-stroke"/>
</g>
<g transform="translate(430,590) scale(0.24450)" fill="none" stroke="#7c7b86" stroke-width="1.0" stroke-linecap="round" stroke-linejoin="round">
<path d="M240,150 Q270,50 380,40 Q500,50 530,150 Q550,300 540,420 L470,560" vector-effect="non-scaling-stroke"/>
<path d="M240,150 Q230,300 240,440 L330,510" vector-effect="non-scaling-stroke"/>
<path d="M260,210 Q340,240 500,210" vector-effect="non-scaling-stroke"/>
<path d="M330,90 Q300,200 320,230" vector-effect="non-scaling-stroke"/>
<path d="M380,50 L390,220" vector-effect="non-scaling-stroke"/>
<path d="M440,90 Q470,180 460,220" vector-effect="non-scaling-stroke"/>
<path d="M300,250 Q330,240 350,265 Q320,270 300,260" vector-effect="non-scaling-stroke"/>
<path d="M430,255 Q460,240 480,260 Q450,270 430,260" vector-effect="non-scaling-stroke"/>
<path d="M380,330 Q395,335 405,330" vector-effect="non-scaling-stroke"/>
<path d="M300,270 Q340,360 400,365 Q460,350 480,260" vector-effect="non-scaling-stroke"/>
<path d="M310,400 H470 L460,480 L320,480 Z" vector-effect="non-scaling-stroke"/>
<path d="M370,380 Q400,370 420,400 L410,440 L385,440 Z" vector-effect="non-scaling-stroke"/>
<path d="M285,490 L190,820 L70,850 L130,900 L200,830 L300,560" vector-effect="non-scaling-stroke"/>
<path d="M510,500 L620,840 L720,880 L700,920 L600,860 L480,560" vector-effect="non-scaling-stroke"/>
<path d="M290,500 Q320,620 290,740 L520,740 Q490,620 500,500" vector-effect="non-scaling-stroke"/>
<path d="M290,760 Q400,790 520,770 L440,880 L360,880 Z" vector-effect="non-scaling-stroke"/>
<path d="M340,800 Q380,850 440,860" vector-effect="non-scaling-stroke"/>
<path d="M300,780 L170,1110 L80,1268" vector-effect="non-scaling-stroke"/>
<path d="M340,890 L230,1200" vector-effect="non-scaling-stroke"/>
<path d="M460,880 L580,1100" vector-effect="non-scaling-stroke"/>
<path d="M520,770 L690,1130 L760,1268" vector-effect="non-scaling-stroke"/>
<path d="M620,1160 L690,1130" vector-effect="non-scaling-stroke"/>
<path d="M130,1200 L220,1130" vector-effect="non-scaling-stroke"/>
</g>
<g transform="translate(410,880) scale(0.32307)" fill="none" stroke="#7c7b86" stroke-width="1.0" stroke-linecap="round" stroke-linejoin="round">
<path d="M570,130 Q550,300 600,900 L610,1201" vector-effect="non-scaling-stroke"/>
<path d="M600,200 Q1000,150 1350,150 Q1700,160 1860,190" vector-effect="non-scaling-stroke"/>
<path d="M820,205 L870,720" vector-effect="non-scaling-stroke"/>
<path d="M605,755 Q900,710 1290,715" vector-effect="non-scaling-stroke"/>
<path d="M1770,75 Q1820,500 1740,1201" vector-effect="non-scaling-stroke"/>
<path d="M600,1160 L900,1130 L1030,1080" vector-effect="non-scaling-stroke"/>
<path d="M1290,160 Q1250,300 1260,420 Q1300,460 1350,450" vector-effect="non-scaling-stroke"/>
<path d="M1360,230 Q1340,600 1250,800 Q1200,900 1180,1130" vector-effect="non-scaling-stroke"/>
<path d="M1300,450 Q1320,550 1270,700 L1170,840" vector-effect="non-scaling-stroke"/>
<path d="M1430,340 Q1450,700 1330,1000 L1200,1130" vector-effect="non-scaling-stroke"/>
<path d="M1590,200 Q1620,500 1580,800 L1540,1201" vector-effect="non-scaling-stroke"/>
<path d="M1700,180 Q1720,500 1690,800" vector-effect="non-scaling-stroke"/>
<path d="M1510,470 Q1470,800 1330,1140" vector-effect="non-scaling-stroke"/>
<path d="M1670,830 L1680,1201" vector-effect="non-scaling-stroke"/>
<path d="M1050,860 Q1150,830 1220,900 L1340,1010" vector-effect="non-scaling-stroke"/>
<path d="M1060,870 Q980,1000 1030,1090 Q1100,1140 1200,1130 Q1290,1100 1280,1000 Q1250,950 1190,970 Q1140,1050 1180,1100" vector-effect="non-scaling-stroke"/>
<path d="M1100,960 L1230,930" vector-effect="non-scaling-stroke"/>
<path d="M1060,1050 Q1130,980 1200,990" vector-effect="non-scaling-stroke"/>
<path d="M30,420 Q100,400 150,440 L190,610 L180,710 L140,710 L100,620" vector-effect="non-scaling-stroke"/>
<path d="M100,520 Q90,700 140,900 L100,1120" vector-effect="non-scaling-stroke"/>
<path d="M40,550 Q80,500 110,490" vector-effect="non-scaling-stroke"/>
<path d="M40,230 Q70,280 40,340" vector-effect="non-scaling-stroke"/>
<path d="M30,700 Q80,660 90,600" vector-effect="non-scaling-stroke"/>
<path d="M110,60 L180,0" vector-effect="non-scaling-stroke"/>
<path d="M490,0 Q520,50 570,70" vector-effect="non-scaling-stroke"/>
</g>
<g transform="translate(1090,880) scale(0.30607)" fill="none" stroke="#6c6b76" stroke-width="1.0" stroke-linecap="round" stroke-linejoin="round">
<path d="M95,160 Q300,145 530,158" vector-effect="non-scaling-stroke"/>
<path d="M610,160 L790,165" vector-effect="non-scaling-stroke"/>
<path d="M990,165 L1190,165" vector-effect="non-scaling-stroke"/>
<path d="M1250,168 L1500,168" vector-effect="non-scaling-stroke"/>
<path d="M60,175 Q45,190 45,250 Q40,600 0,950" vector-effect="non-scaling-stroke"/>
<path d="M1430,170 L1430,780 Q1420,1000 1390,1268" vector-effect="non-scaling-stroke"/>
<path d="M740,270 Q850,200 1000,175 Q1200,170 1415,265" vector-effect="non-scaling-stroke"/>
<path d="M710,285 Q630,440 570,600" vector-effect="non-scaling-stroke"/>
<path d="M615,480 Q610,900 625,1268" vector-effect="non-scaling-stroke"/>
<path d="M760,520 Q770,800 790,1268" vector-effect="non-scaling-stroke"/>
<path d="M830,520 Q850,700 890,830" vector-effect="non-scaling-stroke"/>
<path d="M1270,230 Q1300,300 1300,450" vector-effect="non-scaling-stroke"/>
<path d="M1400,400 Q1400,700 1300,850 Q1150,1000 1130,1190" vector-effect="non-scaling-stroke"/>
<path d="M1140,315 Q1000,500 860,700" vector-effect="non-scaling-stroke"/>
<path d="M855,525 L1075,650" stroke-width="2.6" stroke="#1e1e22" vector-effect="non-scaling-stroke"/>
<path d="M850,545 L1070,660" vector-effect="non-scaling-stroke"/>
<path d="M860,560 L1100,690" vector-effect="non-scaling-stroke"/>
<path d="M1210,735 L1380,810" stroke-width="2.6" stroke="#1e1e22" vector-effect="non-scaling-stroke"/>
<path d="M1200,760 L1380,830" vector-effect="non-scaling-stroke"/>
<path d="M960,620 Q1000,700 1150,770 Q1200,830 1270,840" vector-effect="non-scaling-stroke"/>
<path d="M770,650 Q830,700 900,830" vector-effect="non-scaling-stroke"/>
<path d="M800,700 Q780,900 830,1060 L880,1100" vector-effect="non-scaling-stroke"/>
<path d="M810,1000 L860,1050 L890,1100" vector-effect="non-scaling-stroke"/>
<path d="M970,920 Q1010,940 1020,960" vector-effect="non-scaling-stroke"/>
<path d="M940,1015 Q1000,1040 1030,1050" vector-effect="non-scaling-stroke"/>
<path d="M970,1060 Q1100,1040 1200,1020" vector-effect="non-scaling-stroke"/>
<path d="M1220,950 Q1150,1050 1130,1070" vector-effect="non-scaling-stroke"/>
<path d="M815,985 L820,1060 M820,1000 L850,1010 M815,1000 L770,1050 M825,1010 L870,1120" stroke="#2a2a2a" stroke-width="1.8" vector-effect="non-scaling-stroke"/>
<path d="M1250,1080 Q1180,1150 1130,1190" vector-effect="non-scaling-stroke"/>
<path d="M1270,1150 L1330,1250" vector-effect="non-scaling-stroke"/>
<path d="M1180,1170 L1190,1268" vector-effect="non-scaling-stroke"/>
<path d="M480,1160 Q420,1200 400,1268" vector-effect="non-scaling-stroke"/>
<path d="M530,1140 Q600,1140 620,1120" vector-effect="non-scaling-stroke"/>
<path d="M550,1110 L580,1268" vector-effect="non-scaling-stroke"/>
</g>
<g transform="translate(300,220) scale(0.26810)" fill="none" stroke="#8e8d98" stroke-width="1.0" stroke-linecap="round" stroke-linejoin="round">
<path d="M170,80 Q230,50 300,60 Q380,60 440,80" vector-effect="non-scaling-stroke"/>
<path d="M440,100 L470,70 L480,120" vector-effect="non-scaling-stroke"/>
<path d="M180,90 L230,80 L210,130" vector-effect="non-scaling-stroke"/>
<path d="M290,100 Q270,180 260,240" vector-effect="non-scaling-stroke"/>
<path d="M350,100 Q360,180 370,240" vector-effect="non-scaling-stroke"/>
<path d="M400,150 L410,230" vector-effect="non-scaling-stroke"/>
<path d="M470,160 Q500,250 510,310" vector-effect="non-scaling-stroke"/>
<path d="M130,200 Q140,260 170,320" vector-effect="non-scaling-stroke"/>
<path d="M245,240 Q270,230 300,245" vector-effect="non-scaling-stroke"/>
<path d="M370,240 Q400,230 430,245" vector-effect="non-scaling-stroke"/>
<path d="M290,380 L290,430" vector-effect="non-scaling-stroke"/>
<path d="M370,380 L370,430" vector-effect="non-scaling-stroke"/>
<path d="M200,560 L470,560" vector-effect="non-scaling-stroke"/>
<path d="M230,620 Q330,600 450,630" vector-effect="non-scaling-stroke"/>
<path d="M180,900 Q260,940 330,920" vector-effect="non-scaling-stroke"/>
<path d="M400,900 L450,960" vector-effect="non-scaling-stroke"/>
<path d="M170,790 Q150,830 170,860" vector-effect="non-scaling-stroke"/>
<path d="M480,280 Q500,300 520,300" vector-effect="non-scaling-stroke"/>
<path d="M180,520 L200,700" vector-effect="non-scaling-stroke"/>
<path d="M460,520 L480,700" vector-effect="non-scaling-stroke"/>
</g>
<g transform="translate(680,140) scale(0.12618)" fill="none" stroke="#8e8d98" stroke-width="1.0" stroke-linecap="round" stroke-linejoin="round">
<path d="M250,300 Q300,250 340,200" vector-effect="non-scaling-stroke"/>
<path d="M300,470 Q400,520 520,560" vector-effect="non-scaling-stroke"/>
<path d="M420,300 Q480,320 530,360" vector-effect="non-scaling-stroke"/>
<path d="M640,480 Q700,450 760,470" vector-effect="non-scaling-stroke"/>
<path d="M700,600 Q760,560 780,520" vector-effect="non-scaling-stroke"/>
<path d="M600,700 Q650,720 700,690" vector-effect="non-scaling-stroke"/>
<path d="M480,830 Q500,900 560,980" vector-effect="non-scaling-stroke"/>
<path d="M560,850 Q600,920 640,1000" vector-effect="non-scaling-stroke"/>
<path d="M700,900 Q760,950 800,1020" vector-effect="non-scaling-stroke"/>
<path d="M260,650 Q220,750 250,880" vector-effect="non-scaling-stroke"/>
<path d="M120,700 Q100,800 110,950" vector-effect="non-scaling-stroke"/>
<path d="M900,600 Q950,700 960,850" vector-effect="non-scaling-stroke"/>
<path d="M980,380 Q1050,440 1100,560" vector-effect="non-scaling-stroke"/>
<path d="M1100,650 Q1060,760 1000,840" vector-effect="non-scaling-stroke"/>
<path d="M350,1000 L380,1100" vector-effect="non-scaling-stroke"/>
<path d="M620,1020 L640,1140" vector-effect="non-scaling-stroke"/>
<path d="M720,1040 L740,1160" vector-effect="non-scaling-stroke"/>
</g>
<g transform="translate(1460,60) scale(0.28381)" fill="none" stroke="#74737e" stroke-width="1.0" stroke-linecap="round" stroke-linejoin="round">
<path d="M35,30 L20,840" vector-effect="non-scaling-stroke"/>
<path d="M660,15 L650,800" vector-effect="non-scaling-stroke"/>
<path d="M30,845 Q400,800 720,790" vector-effect="non-scaling-stroke"/>
<path d="M160,160 Q190,80 260,70 Q360,75 380,150 Q400,250 400,300" vector-effect="non-scaling-stroke"/>
<path d="M150,170 Q160,270 200,330 L260,370" vector-effect="non-scaling-stroke"/>
<path d="M240,150 Q230,250 270,300 L320,420" vector-effect="non-scaling-stroke"/>
<path d="M340,150 Q360,230 350,280" vector-effect="non-scaling-stroke"/>
<path d="M250,190 Q300,170 350,175" vector-effect="non-scaling-stroke"/>
<path d="M245,205 L290,215 M250,225 L290,235 M245,215 Q265,232 290,225" stroke="#3a3a40" stroke-width="1.5" vector-effect="non-scaling-stroke"/>
<path d="M320,190 L355,185 M325,210 L355,205 M320,200 Q340,212 355,198" stroke="#3a3a40" stroke-width="1.5" vector-effect="non-scaling-stroke"/>
<path d="M355,150 Q372,220 340,290" stroke="#3a3a40" stroke-width="1.7" vector-effect="non-scaling-stroke"/>
<path d="M310,255 Q325,262 340,250" vector-effect="non-scaling-stroke"/>
<path d="M200,340 Q180,400 130,560 L60,840" vector-effect="non-scaling-stroke"/>
<path d="M240,420 L210,820" vector-effect="non-scaling-stroke"/>
<path d="M400,300 Q450,380 620,500" vector-effect="non-scaling-stroke"/>
<path d="M420,340 Q560,520 660,790" vector-effect="non-scaling-stroke"/>
<path d="M440,400 Q560,560 600,800" vector-effect="non-scaling-stroke"/>
<path d="M240,430 Q290,500 310,600 L320,660 Q380,760 420,800" vector-effect="non-scaling-stroke"/>
<path d="M400,360 Q430,460 440,600 Q430,640 460,680 L540,810" vector-effect="non-scaling-stroke"/>
<path d="M430,660 L500,790" vector-effect="non-scaling-stroke"/>
<path d="M280,330 Q300,380 320,410 L400,400" vector-effect="non-scaling-stroke"/>
<path d="M240,430 L280,330" vector-effect="non-scaling-stroke"/>
<path d="M300,480 Q370,500 420,480" vector-effect="non-scaling-stroke"/>
<path d="M320,600 L440,600" vector-effect="non-scaling-stroke"/>
<path d="M180,330 Q220,340 250,320" vector-effect="non-scaling-stroke"/>
<path d="M120,600 L100,700" vector-effect="non-scaling-stroke"/>
<path d="M40,560 L20,640" vector-effect="non-scaling-stroke"/>
</g>
<g transform="translate(680,460) scale(0.34700)" fill="none" stroke="#8e8d98" stroke-width="1.0" stroke-linecap="round" stroke-linejoin="round">
<path d="M200,60 Q170,200 180,400" vector-effect="non-scaling-stroke"/>
<path d="M330,90 Q400,200 430,400 Q450,550 440,720" vector-effect="non-scaling-stroke"/>
<path d="M460,120 Q520,250 560,450 L600,560" vector-effect="non-scaling-stroke"/>
<path d="M500,260 Q560,380 620,510" vector-effect="non-scaling-stroke"/>
<path d="M420,200 Q470,330 480,480" vector-effect="non-scaling-stroke"/>
<path d="M60,350 Q90,450 130,520" vector-effect="non-scaling-stroke"/>
<path d="M120,100 Q200,40 300,45 Q400,60 480,130" vector-effect="non-scaling-stroke"/>
<path d="M130,430 Q160,460 200,440" vector-effect="non-scaling-stroke"/>
<path d="M310,370 Q340,400 380,380" vector-effect="non-scaling-stroke"/>
<path d="M185,560 L205,550 Q215,560 205,600 L195,640" vector-effect="non-scaling-stroke"/>
<path d="M120,620 Q110,650 140,660" vector-effect="non-scaling-stroke"/>
<path d="M300,590 L430,570" vector-effect="non-scaling-stroke"/>
<path d="M280,630 L440,610" vector-effect="non-scaling-stroke"/>
<path d="M560,600 Q600,700 650,940" vector-effect="non-scaling-stroke"/>
<path d="M450,700 Q560,850 620,860" vector-effect="non-scaling-stroke"/>
<path d="M260,720 Q300,880 350,960" vector-effect="non-scaling-stroke"/>
<path d="M540,560 Q640,560 680,600" vector-effect="non-scaling-stroke"/>
<path d="M240,730 L270,1050" vector-effect="non-scaling-stroke"/>
<path d="M180,720 L200,1040" vector-effect="non-scaling-stroke"/>
<path d="M450,120 Q490,120 510,140" vector-effect="non-scaling-stroke"/>
<path d="M0,460 L60,440" vector-effect="non-scaling-stroke"/>
</g>
</svg>
<!-- end sketches -->
<!-- left panel -->
<div class="a" style="left:0;top:59px;width:99px;height:35px;background:#4d4d4d"></div>
<div class="a" style="left:0;top:61px;width:37px;height:31px;background:#666f8a;border-radius:0 3px 3px 0"></div>

<div class="a" style="left:0;top:93px;width:99px;height:352px;background:#2a2a2a"></div>
<div class="a" style="left:83px;top:95px;width:15px;height:349px;background:#444"></div>
<div class="a" style="left:83px;top:95px;width:15px;height:15px;background:#575757;border-radius:3px"></div>
<svg style="left:83px;top:95px" width="15" height="14"><path d="M4 9 L7.5 5.5 L11 9" stroke="#bdbdbd" stroke-width="1.1" fill="none"/></svg>
<div class="a" style="left:84px;top:111px;width:13px;height:278px;background:#5a5a5a;border-radius:6px"></div>
<div class="a" style="left:83px;top:429px;width:15px;height:15px;background:#575757;border-radius:3px"></div>
<svg style="left:83px;top:429px" width="15" height="14"><path d="M4 5 L7.5 8.5 L11 5" stroke="#bdbdbd" stroke-width="1.1" fill="none"/></svg>
<div class="a" style="left:0;top:95px;width:82px;height:42px;background:#5f6985"></div>
<div class="a" style="left:46px;top:117px;width:34px;height:18px;background:#535c72;border-radius:2px"></div>
<div class="t" style="right:1902px;top:119px;font-size:13.5px;color:#dedede">Hard</div>
<div class="a" style="left:0;top:138px;width:82px;height:42px;background:#3d3d3d"></div>
<div class="t" style="right:1902px;top:162px;font-size:13.5px;color:#dedede">Soft</div>
<div class="a" style="left:0;top:181px;width:82px;height:42px;background:#3d3d3d"></div>
<div class="t" style="right:1902px;top:205px;font-size:13.5px;color:#dedede">Threaded eraser</div>
<div class="a" style="left:0;top:224px;width:82px;height:42px;background:#3d3d3d"></div>
<div class="t" style="right:1902px;top:248px;font-size:13.5px;color:#dedede">Rough</div>
<div class="a" style="left:0;top:267px;width:82px;height:42px;background:#3d3d3d"></div>
<div class="t" style="right:1902px;top:291px;font-size:13.5px;color:#dedede">Vector</div>
<div class="a" style="left:0;top:310px;width:82px;height:42px;background:#3d3d3d"></div>
<div class="t" style="right:1902px;top:334px;font-size:13.5px;color:#dedede">Erase Along Edge</div>
<div class="a" style="left:0;top:353px;width:82px;height:42px;background:#3d3d3d"></div>
<div class="t" style="right:1902px;top:377px;font-size:13.5px;color:#dedede">Multiple layers</div>
<div class="a" style="left:0;top:396px;width:82px;height:42px;background:#3d3d3d"></div>
<div class="t" style="right:1902px;top:420px;font-size:13.5px;color:#dedede">Snap eraser</div>

<!-- left lower panel -->
<div class="a" style="left:0;top:438px;width:99px;height:7px;background:#3a3a3a"></div>
<div class="a" style="left:0;top:445px;width:99px;height:25px;background:#4a4a4a"></div>
<svg style="left:0;top:445px" width="99" height="25">
 <rect x="28.5" y="6.5" width="16" height="14" rx="2.5" stroke="#bdbdbd" stroke-width="1.2" fill="none"/>
 <path d="M36.5 4 V15 M32.5 11 L36.5 15 L40.5 11" stroke="#bdbdbd" stroke-width="1.2" fill="none"/>
 <rect x="53" y="5" width="12" height="11" rx="2" stroke="#bdbdbd" stroke-width="1.2" fill="#4a4a4a"/>
 <rect x="57" y="9" width="13" height="12" rx="2" stroke="#bdbdbd" stroke-width="1.2" fill="#4a4a4a"/>
 <path d="M63.5 12 V18 M60.5 15 H66.5" stroke="#bdbdbd" stroke-width="1.2"/>
 <path d="M79.5 6.5 H94 M84 6.5 V4.5 H89.5 V6.5 M81 6.5 L82 19.5 Q82 21 84 21 H89.5 Q91.5 21 91.5 19.5 L92.5 6.5 M84.5 9 V18.5 M87 9 V18.5 M89.5 9 V18.5" stroke="#bdbdbd" stroke-width="1.2" fill="none"/>
</svg>
<div class="a" style="left:0;top:470px;width:99px;height:25px;background:#383838"></div>
<div class="a" style="left:0;top:475px;width:17px;height:19px;background:#474747"></div>
<div class="t" style="right:1970px;top:479px;font-size:12.5px;color:#d0d0d0">Standard</div>
<div class="a" style="left:0;top:494px;width:99px;height:6px;background:#474747"></div>
<div class="a" style="left:0;top:500px;width:99px;height:1px;background:#333"></div>
<div class="a" style="left:0;top:501px;width:98px;height:48px;background:#4d4d4d"></div>
<svg style="left:70px;top:524px" width="25" height="25">
 <path d="M7 12 V8.5 Q7 5 10 5 Q13 5 13 8.5 V9" stroke="#bdbdbd" stroke-width="1.4" fill="none"/>
 <rect x="9" y="12" width="11" height="8.5" rx="1.5" fill="#bdbdbd"/>
</svg>
<div class="a" style="left:0;top:549px;width:99px;height:313px;background:#3d3d3d"></div>
<div class="a" style="left:83px;top:549px;width:16px;height:313px;background:#444"></div>


<div class="t" style="right:1937px;top:562px;font-size:13px;color:#d8d8d8;letter-spacing:-0.6px">60.0</div>
<div class="t" style="right:1937px;top:683px;font-size:13px;color:#d8d8d8;letter-spacing:-0.6px">100</div>
<div class="t" style="right:1937px;top:767px;font-size:13px;color:#d8d8d8;letter-spacing:-0.6px">12</div>
<svg style="left:0;top:549px" width="99" height="313">
 <g stroke="#c4c4c4" stroke-width="1" fill="none">
  <path d="M47 18 L51.5 13 L56 18 M47 22 L51.5 27 L56 22"/>
  <path d="M47 139 L51.5 134 L56 139 M47 143 L51.5 148 L56 143"/>
  <path d="M47 223 L51.5 218 L56 223 M47 227 L51.5 232 L56 227"/>
 </g>
 <rect x="61.5" y="4.5" width="18.5" height="29" rx="2" fill="#555" stroke="#6a6a6a"/>
 <path d="M70.5 11 V21" stroke="#c4c4c4" stroke-width="1.4"/>
 <path d="M66.5 17 L70.5 21.5 L74.5 17 Z" fill="#c4c4c4"/>
 <path d="M64.5 21 Q70.5 27 76.5 21" stroke="#c4c4c4" stroke-width="1.3" fill="none"/>
 <path d="M0 39.5 H79" stroke="#555" stroke-width="1"/>
 <rect x="-3" y="46.5" width="83" height="29" rx="2" fill="#505050" stroke="#5c5c5c"/>
 <rect x="8" y="47" width="27" height="28" fill="#7b8fbf"/>
 <circle cx="21.5" cy="60.5" r="9.5" fill="#a2abc4"/>
 <circle cx="21.5" cy="60.5" r="7" fill="#bcbcbc"/>
 <circle cx="48.5" cy="60.5" r="10.5" fill="#646464"/>
 <circle cx="48.5" cy="60.5" r="8" fill="#8e8e8e"/>
 <circle cx="48.5" cy="60.5" r="5" fill="#bfbfbf"/>
 <circle cx="-4" cy="60.5" r="7" fill="#bcbcbc"/>
 <path d="M64.5 57.5 L70.5 63.5 L76.5 57.5" stroke="#c8c8c8" stroke-width="1.2" fill="none"/>
 <path d="M0 81.5 H79" stroke="#555" stroke-width="1"/>
 <rect x="-3" y="90" width="10" height="21" fill="#5e6883"/>
 <rect x="10" y="90" width="23" height="21" fill="#5e6883"/>
 <rect x="36" y="90" width="23" height="21" fill="#5e6883"/>
 <rect x="61.5" y="88.5" width="18.5" height="24" rx="2" fill="#555" stroke="#6a6a6a"/>
 <path d="M67.5 95 L73 100.5 L67.5 106" stroke="#c8c8c8" stroke-width="1.2" fill="none"/>
 <path d="M0 118.5 H79" stroke="#555" stroke-width="1"/>
 <rect x="61.5" y="125.5" width="18.5" height="29" rx="2" fill="#555" stroke="#6a6a6a"/>
 <rect x="65.5" y="134" width="10" height="10" rx="1.5" stroke="#c4c4c4" stroke-width="1.1" fill="none"/>
 <path d="M66.5 143 L74.5 135" stroke="#c4c4c4" stroke-width="1.1"/>
 <path d="M0 160.5 H79" stroke="#555" stroke-width="1"/>
 <rect x="-3" y="167" width="83" height="30" rx="2" fill="#424242"/>
 <path d="M12 181.5 H31 M21.5 172 V191 M-1 181.5 H4 M39 181.5 H58 M48.5 172 V191" stroke="#5c5c5c" stroke-width="2.6"/>
 <path d="M64.5 178.5 L70.5 184.5 L76.5 178.5" stroke="#c8c8c8" stroke-width="1.2" fill="none"/>
 <path d="M0 202.5 H79" stroke="#555" stroke-width="1"/>
</svg>


<!-- color wheel panel -->
<div class="a" style="left:131px;top:862px;width:290px;height:1px;background:#f2f2f2"></div>
<div class="a" style="left:420px;top:868px;width:4px;height:400px;background:linear-gradient(to right,rgba(0,0,0,0.35),rgba(0,0,0,0))"></div>
<div class="a" style="left:0;top:863px;width:420px;height:405px;background:#383838"></div>
<div class="t" style="left:99px;top:868px;font-size:11.5px;color:#c2c2c2">Color Wheel</div>
<div class="a" style="left:380px;top:879px;width:11px;height:1.5px;background:#cfcfcf"></div>
<svg style="left:398px;top:869px" width="14" height="14"><path d="M1.5 1.5 L11 11 M11 1.5 L1.5 11" stroke="#d0d0d0" stroke-width="1.2"/></svg>
<div class="a" style="left:0;top:886px;width:414px;height:382px;background:#4d4d4d;overflow:hidden">
 <div class="a" style="left:-73.5px;top:0.5px;width:406px;height:406px;border-radius:50%;background:#333"></div>
 <div class="a" style="left:-73px;top:1px;width:405px;height:405px;border-radius:50%;background:conic-gradient(#f0f01a 0deg,#96f01a 40deg,#1ee61a 62deg,#12ee80 95deg,#12eef0 125deg,#1290f0 155deg,#1010ee 182deg,#8010ee 215deg,#ee10ee 245deg,#ee1080 280deg,#ee1a10 300deg,#f08a10 335deg,#f0f01a 360deg)"></div>
 <div class="a" style="left:-40.5px;top:34.5px;width:339px;height:339px;border-radius:50%;background:#333"></div>
 <div class="a" style="left:-39.5px;top:34.5px;width:338px;height:338px;border-radius:50%;background:#4d4d4d"></div>
 <div class="a" style="left:17px;top:90px;width:227px;height:227px;background:#3a3a3a"></div>
 <div class="a" style="left:18px;top:91px;width:225px;height:225px;background:linear-gradient(to top,#000 0%,rgba(0,0,0,0) 100%),linear-gradient(to right,#fff 0%,#f00 100%)"></div>
</div>
<svg style="left:0;top:1050px" width="40" height="30"><circle cx="17.5" cy="16" r="5.5" fill="none" stroke="#2a2a2a" stroke-width="2.6"/><circle cx="17.5" cy="16" r="5.5" fill="none" stroke="#f0f0f0" stroke-width="1.3"/></svg>





<!-- layer panel -->
<div class="a" style="left:1663px;top:408px;width:318px;height:860px;background:#383838"></div>
<div class="a" style="left:1669px;top:430px;width:312px;height:83px;background:#4d4d4d"></div>
<div class="t" style="left:1819px;top:413px;font-size:11.5px;color:#c2c2c2">Layer</div>
<svg style="left:1663px;top:408px" width="318" height="105"><path d="M11 8.5 H22 M11 13 H22 M11 16.8 H22" stroke="#5c5c5c" stroke-width="1.1"/><path d="M298 16.5 H309" stroke="#cfcfcf" stroke-width="1.4"/></svg>
<svg style="left:1663px;top:408px" width="318" height="105">
 <defs><linearGradient id="bg1" x1="0" y1="0" x2="0" y2="1"><stop offset="0" stop-color="#686868"/><stop offset="1" stop-color="#646464"/></linearGradient>
 <pattern id="chk" width="12" height="12" patternUnits="userSpaceOnUse" x="177" y="29"><rect width="12" height="12" fill="#fff"/><rect width="6" height="6" fill="#c8c8c8"/><rect x="6" y="6" width="6" height="6" fill="#c8c8c8"/></pattern>
 <linearGradient id="fade" x1="0" y1="0" x2="1" y2="0"><stop offset="0" stop-color="#bdbdbd" stop-opacity="0"/><stop offset="1" stop-color="#bdbdbd" stop-opacity="0.9"/></linearGradient></defs>
 <rect x="7.5" y="23.5" width="48" height="24" rx="2.5" fill="url(#bg1)" stroke="#727272"/>
 <rect x="13.5" y="27.5" width="19" height="16" rx="2.5" fill="none" stroke="#bdbdbd" stroke-width="1.2"/>
 <path d="M41.5 33.5 L46.5 38.5 L51.5 33.5" stroke="#c8c8c8" stroke-width="1.1" fill="none"/>
 <rect x="60.5" y="23.5" width="108.5" height="24" rx="2.5" fill="url(#bg1)" stroke="#727272"/>
 <path d="M154.5 33.5 L159.5 38.5 L164.5 33.5" stroke="#c8c8c8" stroke-width="1.1" fill="none"/>
 <rect x="170" y="23" width="117" height="25" fill="#4a4a4a"/>
 <rect x="177" y="29" width="107" height="11" fill="url(#chk)"/>
 <rect x="177" y="29" width="107" height="11" fill="url(#fade)"/>
 <rect x="284.5" y="23.5" width="4" height="24" rx="1.5" fill="#5c5c5c" stroke="#6a6a6a"/>
 <!-- row2 icons -->
 <rect x="76" y="59" width="11" height="11" rx="2" fill="#6a6a6a"/>
 <rect x="79" y="55" width="11" height="11" rx="2" fill="#bdbdbd"/>
 <rect x="81.5" y="52.5" width="10" height="10" rx="2.5" fill="none" stroke="#bdbdbd" stroke-width="1.3" stroke-dasharray="2.5 1.6"/>
 <path d="M99 56 L108 59.5 M116 56 L107 59.5 M99 66 L108 62.5 M116 66 L107 62.5" stroke="#bdbdbd" stroke-width="1.1"/>
 <rect x="105" y="57.5" width="5" height="5" fill="none" stroke="#bdbdbd" stroke-width="1.2"/>
 <path d="M105.5 62.5 L104 70 H111 L109.5 62.5 Z" fill="#bdbdbd"/>
 <path d="M125.5 52.5 H133 V56 L131 64 L128 70 L125.5 62 Z" fill="none" stroke="#bdbdbd" stroke-width="1.3"/>
 <path d="M126.5 53.5 H132 V56 L129 59 L127 56 Z" fill="#bdbdbd"/>
 <path d="M129 70 Q133 66 137 69" stroke="#bdbdbd" stroke-width="1.2" fill="none"/>
 <path d="M153.5 58.5 V56 Q153.5 52.5 157.5 52.5 Q161.5 52.5 161.5 56 V58.5" stroke="#bdbdbd" stroke-width="1.6" fill="none"/>
 <rect x="151" y="58.5" width="13" height="10" rx="1.5" fill="#bdbdbd"/>
 <rect x="181" y="52" width="5" height="5" fill="#8a8a8a"/><rect x="186" y="57" width="5" height="5" fill="#8a8a8a"/><rect x="191" y="52" width="5" height="5" fill="#8a8a8a"/><rect x="191" y="62" width="5" height="5" fill="#8a8a8a"/>
 <path d="M176.5 62.5 V61 Q176.5 58.5 179.5 58.5 Q182.5 58.5 182.5 61 V62.5" stroke="#bdbdbd" stroke-width="1.4" fill="none"/>
 <rect x="174.5" y="62.5" width="10" height="7.5" rx="1.2" fill="#bdbdbd"/>
 <rect x="195" y="49" width="44.5" height="24.5" rx="3" fill="#505050"/>
 <rect x="202" y="53" width="17" height="17" rx="2.5" fill="#6a6a6a"/>
 <circle cx="209.5" cy="60" r="4.8" fill="none" stroke="#4d4d4d" stroke-width="2.3"/>
 <path d="M213 64 L221 72 M221 64 L213 72" stroke="#6e6e6e" stroke-width="1.5"/>
 <path d="M226 58 L231 63 L236 58" stroke="#6e6e6e" stroke-width="1.1" fill="none"/>
 <rect x="241" y="49" width="44.5" height="24.5" rx="3" fill="#505050"/>
 <path d="M249 53 H263 L249 68 Z" fill="#6a6a6a"/><path d="M252.5 57 H257 L252.5 62 Z" fill="#4d4d4d"/>
 <path d="M258 64 L266 72 M266 64 L258 72" stroke="#6e6e6e" stroke-width="1.5"/>
 <path d="M272 58 L277 63 L282 58" stroke="#6e6e6e" stroke-width="1.1" fill="none"/>
 <rect x="287.5" y="49.5" width="40" height="24.5" rx="3" fill="#5a5a5a" stroke="#6a6a6a"/>
 <rect x="296" y="57" width="12" height="12" fill="#fff" stroke="#fff"/>
 <rect x="291.5" y="52.5" width="12" height="12" fill="#3f8ae8" stroke="#e8e8e8" stroke-width="0.8"/>
 <!-- row3 -->
 <rect x="10.5" y="81.5" width="16" height="16" rx="2" fill="none" stroke="#bdbdbd" stroke-width="1.2"/>
 <path d="M10.5 89.5 H26.5" stroke="#bdbdbd" stroke-width="1.2"/>
 <path d="M13 84.5 H15.5 M13 86.5 H16 M13 92.5 H15.5 M13 94.5 H16" stroke="#bdbdbd" stroke-width="1"/>
 <g transform="translate(135,0)">
  <path d="M1.5 95.5 V79.5 H18.5 V93" stroke="#bdbdbd" stroke-width="1.3" fill="none"/><path d="M1.5 95.5 H12" stroke="#bdbdbd" stroke-width="1.3"/><path d="M2 88 L8 95 H2 Z" fill="#bdbdbd"/>
  <circle cx="15.5" cy="96" r="5.2" fill="#bdbdbd"/><path d="M15.5 92.5 V99.5 M12 96 H19" stroke="#4d4d4d" stroke-width="1.3"/>
 </g>
 <g transform="translate(161,0)">
  <path d="M1.5 95.5 V79.5 H18.5 V93" stroke="#bdbdbd" stroke-width="1.3" fill="none"/><path d="M1.5 95.5 H12" stroke="#bdbdbd" stroke-width="1.3"/><path d="M2 88 L8 95 H2 Z" fill="#bdbdbd"/>
  <path d="M5 84 L10 81.5 L15 84 V90 L10 92.5 L5 90 Z M5 84 L10 86.5 L15 84 M10 86.5 V92.5" stroke="#bdbdbd" stroke-width="1.2" fill="none"/>
  <circle cx="16" cy="96" r="5.2" fill="#bdbdbd"/><path d="M16 92.5 V99.5 M12.5 96 H19.5" stroke="#4d4d4d" stroke-width="1.3"/>
 </g>
 <g transform="translate(184,0)">
  <path d="M1 80 H8 L10 82 H19 V96 H1 Z" fill="#bdbdbd"/>
  <circle cx="18" cy="96" r="5.2" fill="#bdbdbd"/><path d="M18 92.5 V99.5 M14.5 96 H21.5" stroke="#4d4d4d" stroke-width="1.3"/>
 </g>
 <g transform="translate(209,0)" stroke="#6e6e6e" stroke-width="1.3" fill="none">
  <rect x="8.5" y="78.5" width="12" height="12" rx="2.5"/><rect x="1.5" y="86.5" width="12" height="12" rx="2.5" fill="#4d4d4d"/><rect x="12" y="82" width="5" height="5" fill="#6e6e6e" stroke="none"/>
 </g>
 <g transform="translate(234,0)" stroke="#6e6e6e" stroke-width="1.3" fill="none">
  <rect x="8.5" y="78.5" width="12" height="12" rx="2.5"/><rect x="1.5" y="86.5" width="12" height="12" rx="2.5" fill="#4d4d4d"/><path d="M13 87 L5 95"/>
 </g>
 <rect x="260.5" y="78.5" width="17.5" height="18" rx="2.5" fill="#bdbdbd"/><circle cx="269.2" cy="87.5" r="5" fill="#4d4d4d"/>
 <g transform="translate(284,0)"><path d="M1.5 96 V79.5 H15" stroke="#6e6e6e" stroke-width="1.3" fill="none"/><rect x="9" y="83" width="13" height="14" rx="3" fill="#6e6e6e"/><circle cx="15.5" cy="90" r="3" fill="#4d4d4d"/><path d="M2 88 L7 85 V91 Z" fill="#6e6e6e"/></g>
 <path d="M312 81.5 H320 M313 82 L314 97 H320" stroke="#bdbdbd" stroke-width="1.3" fill="none"/>
</svg>
<div class="t" style="left:1957px;top:436px;font-size:13px;color:#d6d6d6;letter-spacing:-0.3px">100</div>
<div class="t" style="left:1749px;top:436px;font-size:13.3px;color:#dcdcdc">Normal</div>
<div class="a" style="left:1669px;top:513px;width:310px;height:755px;background:#2c2c2c"></div>
<svg style="left:0;top:0" width="1" height="1"><defs><pattern id="tc" width="10" height="10" x="59" y="6" patternUnits="userSpaceOnUse"><rect width="10" height="10" fill="#fff"/><rect x="5" width="5" height="5" fill="#cdcdcd"/><rect y="5" width="5" height="5" fill="#cdcdcd"/></pattern></defs></svg>
<div class="a" style="left:1669px;top:514px;width:25px;height:37px;background:#3d3d3d"></div>
<div class="a" style="left:1695px;top:514px;width:22px;height:37px;background:#3d3d3d"></div>
<div class="a" style="left:1718px;top:514px;width:261px;height:37px;background:#5f6985"></div>
<div class="a" style="left:1724px;top:516px;width:40px;height:33px;border:1.5px solid #e6e6e6"></div>
<svg style="left:1669px;top:514px" width="100" height="37"><path d="M4.5 20.5 Q3.5 17 7 15 Q12.5 11.5 18 15 Q21.5 17 20.5 20.5" stroke="#bdbdbd" stroke-width="1.5" fill="none"/><circle cx="12.5" cy="18.5" r="3.8" fill="#bdbdbd"/><path d="M29 27 L40 15 Q41.5 13.5 43 15 Q44.5 16.5 43 18 L32 29 Z" fill="#bdbdbd"/><path d="M28 29.5 H44" stroke="#bdbdbd" stroke-width="1.3"/><rect x="58" y="5.5" width="34" height="27" fill="url(#tc)" stroke="#222" stroke-width="1.2"/></svg>
<div class="t" style="left:1771px;top:518.5px;font-size:13px;line-height:15px;color:#d9d9d9;letter-spacing:-0.1px">100 % Normal<br>Layer 27</div>
<div class="a" style="left:1669px;top:552px;width:25px;height:37px;background:#3d3d3d"></div>
<div class="a" style="left:1695px;top:552px;width:22px;height:37px;background:#3d3d3d"></div>
<div class="a" style="left:1718px;top:552px;width:261px;height:37px;background:#3d3d3d"></div>
<svg style="left:1669px;top:552px" width="100" height="37"><rect x="5.5" y="11.5" width="14" height="13" rx="2.5" fill="none" stroke="#333" stroke-width="1.2"/><rect x="31" y="11.5" width="14" height="13" rx="2.5" fill="none" stroke="#333" stroke-width="1.2"/><rect x="58" y="5.5" width="34" height="27" fill="url(#tc)" stroke="#222" stroke-width="1.2"/></svg>
<div class="t" style="left:1771px;top:556.5px;font-size:13px;line-height:15px;color:#d9d9d9;letter-spacing:-0.1px">100 % Normal<br>おおお</div>
<div class="a" style="left:1669px;top:590px;width:25px;height:37px;background:#3d3d3d"></div>
<div class="a" style="left:1695px;top:590px;width:22px;height:37px;background:#3d3d3d"></div>
<div class="a" style="left:1718px;top:590px;width:261px;height:37px;background:#3d3d3d"></div>
<svg style="left:1669px;top:590px" width="100" height="37"><path d="M4.5 20.5 Q3.5 17 7 15 Q12.5 11.5 18 15 Q21.5 17 20.5 20.5" stroke="#bdbdbd" stroke-width="1.5" fill="none"/><circle cx="12.5" cy="18.5" r="3.8" fill="#bdbdbd"/><rect x="31" y="11.5" width="14" height="13" rx="2.5" fill="none" stroke="#333" stroke-width="1.2"/><rect x="58" y="5.5" width="34" height="27" fill="url(#tc)" stroke="#222" stroke-width="1.2"/></svg>
<div class="t" style="left:1771px;top:594.5px;font-size:13px;line-height:15px;color:#d9d9d9;letter-spacing:-0.1px">100 % Normal<br>Layer 24</div>
<div class="a" style="left:1669px;top:628px;width:25px;height:37px;background:#3d3d3d"></div>
<div class="a" style="left:1695px;top:628px;width:22px;height:37px;background:#3d3d3d"></div>
<div class="a" style="left:1718px;top:628px;width:261px;height:37px;background:#3d3d3d"></div>
<svg style="left:1669px;top:628px" width="100" height="37"><path d="M4.5 20.5 Q3.5 17 7 15 Q12.5 11.5 18 15 Q21.5 17 20.5 20.5" stroke="#bdbdbd" stroke-width="1.5" fill="none"/><circle cx="12.5" cy="18.5" r="3.8" fill="#bdbdbd"/><rect x="31" y="11.5" width="14" height="13" rx="2.5" fill="none" stroke="#333" stroke-width="1.2"/><rect x="58" y="5.5" width="34" height="27" fill="url(#tc)" stroke="#222" stroke-width="1.2"/></svg>
<div class="t" style="left:1771px;top:632.5px;font-size:13px;line-height:15px;color:#d9d9d9;letter-spacing:-0.1px">100 % Normal<br>Layer 25</div>
<div class="a" style="left:1669px;top:666px;width:25px;height:37px;background:#3d3d3d"></div>
<div class="a" style="left:1695px;top:666px;width:22px;height:37px;background:#3d3d3d"></div>
<div class="a" style="left:1718px;top:666px;width:261px;height:37px;background:#3d3d3d"></div>
<svg style="left:1669px;top:666px" width="100" height="37"><path d="M4.5 20.5 Q3.5 17 7 15 Q12.5 11.5 18 15 Q21.5 17 20.5 20.5" stroke="#bdbdbd" stroke-width="1.5" fill="none"/><circle cx="12.5" cy="18.5" r="3.8" fill="#bdbdbd"/><rect x="31" y="11.5" width="14" height="13" rx="2.5" fill="none" stroke="#333" stroke-width="1.2"/><rect x="58" y="5.5" width="34" height="27" fill="url(#tc)" stroke="#222" stroke-width="1.2"/></svg>
<div class="t" style="left:1771px;top:670.5px;font-size:13px;line-height:15px;color:#d9d9d9;letter-spacing:-0.1px">100 % Normal<br>Layer 22</div>
<div class="a" style="left:1669px;top:704px;width:25px;height:37px;background:#3d3d3d"></div>
<div class="a" style="left:1695px;top:704px;width:22px;height:37px;background:#3d3d3d"></div>
<div class="a" style="left:1718px;top:704px;width:261px;height:37px;background:#3d3d3d"></div>
<svg style="left:1669px;top:704px" width="100" height="37"><rect x="5.5" y="11.5" width="14" height="13" rx="2.5" fill="none" stroke="#333" stroke-width="1.2"/><rect x="31" y="11.5" width="14" height="13" rx="2.5" fill="none" stroke="#333" stroke-width="1.2"/><rect x="58" y="5.5" width="34" height="27" fill="url(#tc)" stroke="#222" stroke-width="1.2"/></svg>
<div class="t" style="left:1771px;top:708.5px;font-size:13px;line-height:15px;color:#d9d9d9;letter-spacing:-0.1px">21 % Normal<br>EDS SKETC</div>
<div class="a" style="left:1669px;top:742px;width:25px;height:37px;background:#3d3d3d"></div>
<div class="a" style="left:1695px;top:742px;width:22px;height:37px;background:#3d3d3d"></div>
<div class="a" style="left:1718px;top:742px;width:261px;height:37px;background:#3d3d3d"></div>
<svg style="left:1669px;top:742px" width="100" height="37"><path d="M4.5 20.5 Q3.5 17 7 15 Q12.5 11.5 18 15 Q21.5 17 20.5 20.5" stroke="#bdbdbd" stroke-width="1.5" fill="none"/><circle cx="12.5" cy="18.5" r="3.8" fill="#bdbdbd"/><rect x="31" y="11.5" width="14" height="13" rx="2.5" fill="none" stroke="#333" stroke-width="1.2"/><rect x="58" y="5.5" width="34" height="27" fill="url(#tc)" stroke="#222" stroke-width="1.2"/></svg>
<div class="t" style="left:1771px;top:746.5px;font-size:13px;line-height:15px;color:#d9d9d9;letter-spacing:-0.1px">100 % Normal<br>Layer 23</div>
<div class="a" style="left:1669px;top:780px;width:25px;height:37px;background:#3d3d3d"></div>
<div class="a" style="left:1695px;top:780px;width:22px;height:37px;background:#3d3d3d"></div>
<div class="a" style="left:1718px;top:780px;width:261px;height:37px;background:#3d3d3d"></div>
<svg style="left:1669px;top:780px" width="100" height="37"><path d="M4.5 20.5 Q3.5 17 7 15 Q12.5 11.5 18 15 Q21.5 17 20.5 20.5" stroke="#bdbdbd" stroke-width="1.5" fill="none"/><circle cx="12.5" cy="18.5" r="3.8" fill="#bdbdbd"/><rect x="31" y="11.5" width="14" height="13" rx="2.5" fill="none" stroke="#333" stroke-width="1.2"/><rect x="58" y="5.5" width="34" height="27" fill="url(#tc)" stroke="#222" stroke-width="1.2"/></svg>
<div class="t" style="left:1771px;top:784.5px;font-size:13px;line-height:15px;color:#d9d9d9;letter-spacing:-0.1px">100 % Normal<br>yuri sketch</div>
<div class="a" style="left:1669px;top:818px;width:25px;height:37px;background:#3d3d3d"></div>
<div class="a" style="left:1695px;top:818px;width:22px;height:37px;background:#3d3d3d"></div>
<div class="a" style="left:1718px;top:818px;width:261px;height:37px;background:#3d3d3d"></div>
<svg style="left:1669px;top:818px" width="100" height="37"><rect x="5.5" y="11.5" width="14" height="13" rx="2.5" fill="none" stroke="#333" stroke-width="1.2"/><rect x="31" y="11.5" width="14" height="13" rx="2.5" fill="none" stroke="#333" stroke-width="1.2"/><rect x="58" y="5.5" width="34" height="27" fill="url(#tc)" stroke="#222" stroke-width="1.2"/></svg>
<div class="t" style="left:1771px;top:822.5px;font-size:13px;line-height:15px;color:#d9d9d9;letter-spacing:-0.1px">100 % Normal<br>cen</div>
<div class="a" style="left:1669px;top:856px;width:25px;height:37px;background:#3d3d3d"></div>
<div class="a" style="left:1695px;top:856px;width:22px;height:37px;background:#3d3d3d"></div>
<div class="a" style="left:1718px;top:856px;width:261px;height:37px;background:#3d3d3d"></div>
<svg style="left:1669px;top:856px" width="100" height="37"><path d="M4.5 20.5 Q3.5 17 7 15 Q12.5 11.5 18 15 Q21.5 17 20.5 20.5" stroke="#bdbdbd" stroke-width="1.5" fill="none"/><circle cx="12.5" cy="18.5" r="3.8" fill="#bdbdbd"/><rect x="31" y="11.5" width="14" height="13" rx="2.5" fill="none" stroke="#333" stroke-width="1.2"/><rect x="58" y="5.5" width="34" height="27" fill="url(#tc)" stroke="#222" stroke-width="1.2"/></svg>
<div class="t" style="left:1771px;top:860.5px;font-size:13px;line-height:15px;color:#d9d9d9;letter-spacing:-0.1px">100 % Normal<br>Layer 21</div>
<div class="a" style="left:1669px;top:894px;width:25px;height:37px;background:#3d3d3d"></div>
<div class="a" style="left:1695px;top:894px;width:22px;height:37px;background:#3d3d3d"></div>
<div class="a" style="left:1718px;top:894px;width:261px;height:37px;background:#3d3d3d"></div>
<svg style="left:1669px;top:894px" width="100" height="37"><path d="M4.5 20.5 Q3.5 17 7 15 Q12.5 11.5 18 15 Q21.5 17 20.5 20.5" stroke="#bdbdbd" stroke-width="1.5" fill="none"/><circle cx="12.5" cy="18.5" r="3.8" fill="#bdbdbd"/><rect x="31" y="11.5" width="14" height="13" rx="2.5" fill="none" stroke="#333" stroke-width="1.2"/><rect x="58" y="5.5" width="34" height="27" fill="url(#tc)" stroke="#222" stroke-width="1.2"/></svg>
<div class="t" style="left:1771px;top:898.5px;font-size:13px;line-height:15px;color:#d9d9d9;letter-spacing:-0.1px">100 % Normal<br>Layer 20</div>
<div class="a" style="left:1669px;top:932px;width:25px;height:37px;background:#3d3d3d"></div>
<div class="a" style="left:1695px;top:932px;width:22px;height:37px;background:#3d3d3d"></div>
<div class="a" style="left:1718px;top:932px;width:261px;height:37px;background:#3d3d3d"></div>
<svg style="left:1669px;top:932px" width="100" height="37"><path d="M4.5 20.5 Q3.5 17 7 15 Q12.5 11.5 18 15 Q21.5 17 20.5 20.5" stroke="#bdbdbd" stroke-width="1.5" fill="none"/><circle cx="12.5" cy="18.5" r="3.8" fill="#bdbdbd"/><rect x="31" y="11.5" width="14" height="13" rx="2.5" fill="none" stroke="#333" stroke-width="1.2"/><rect x="58" y="5.5" width="34" height="27" fill="url(#tc)" stroke="#222" stroke-width="1.2"/></svg>
<div class="t" style="left:1771px;top:936.5px;font-size:13px;line-height:15px;color:#d9d9d9;letter-spacing:-0.1px">100 % Normal<br>3rd</div>
<div class="a" style="left:1669px;top:970px;width:25px;height:37px;background:#3d3d3d"></div>
<div class="a" style="left:1695px;top:970px;width:22px;height:37px;background:#3d3d3d"></div>
<div class="a" style="left:1718px;top:970px;width:261px;height:37px;background:#3d3d3d"></div>
<svg style="left:1669px;top:970px" width="100" height="37"><path d="M4.5 20.5 Q3.5 17 7 15 Q12.5 11.5 18 15 Q21.5 17 20.5 20.5" stroke="#bdbdbd" stroke-width="1.5" fill="none"/><circle cx="12.5" cy="18.5" r="3.8" fill="#bdbdbd"/><rect x="31" y="11.5" width="14" height="13" rx="2.5" fill="none" stroke="#333" stroke-width="1.2"/><rect x="58" y="5.5" width="34" height="27" fill="url(#tc)" stroke="#222" stroke-width="1.2"/></svg>
<div class="t" style="left:1771px;top:974.5px;font-size:13px;line-height:15px;color:#d9d9d9;letter-spacing:-0.1px">100 % Normal<br>しゃd</div>
<div class="a" style="left:1669px;top:1008px;width:25px;height:37px;background:#3d3d3d"></div>
<div class="a" style="left:1695px;top:1008px;width:22px;height:37px;background:#3d3d3d"></div>
<div class="a" style="left:1718px;top:1008px;width:261px;height:37px;background:#3d3d3d"></div>
<svg style="left:1669px;top:1008px" width="100" height="37"><path d="M4.5 20.5 Q3.5 17 7 15 Q12.5 11.5 18 15 Q21.5 17 20.5 20.5" stroke="#bdbdbd" stroke-width="1.5" fill="none"/><circle cx="12.5" cy="18.5" r="3.8" fill="#bdbdbd"/><rect x="31" y="11.5" width="14" height="13" rx="2.5" fill="none" stroke="#333" stroke-width="1.2"/><rect x="58" y="5.5" width="34" height="27" fill="url(#tc)" stroke="#222" stroke-width="1.2"/></svg>
<div class="t" style="left:1771px;top:1012.5px;font-size:13px;line-height:15px;color:#d9d9d9;letter-spacing:-0.1px">100 % Normal<br>Layer 18 Copy</div>
<div class="a" style="left:1669px;top:1046px;width:25px;height:37px;background:#3d3d3d"></div>
<div class="a" style="left:1695px;top:1046px;width:22px;height:37px;background:#3d3d3d"></div>
<div class="a" style="left:1718px;top:1046px;width:261px;height:37px;background:#3d3d3d"></div>
<svg style="left:1669px;top:1046px" width="100" height="37"><path d="M4.5 20.5 Q3.5 17 7 15 Q12.5 11.5 18 15 Q21.5 17 20.5 20.5" stroke="#bdbdbd" stroke-width="1.5" fill="none"/><circle cx="12.5" cy="18.5" r="3.8" fill="#bdbdbd"/><rect x="31" y="11.5" width="14" height="13" rx="2.5" fill="none" stroke="#333" stroke-width="1.2"/><rect x="58" y="5.5" width="34" height="27" fill="url(#tc)" stroke="#222" stroke-width="1.2"/></svg>
<div class="t" style="left:1771px;top:1050.5px;font-size:13px;line-height:15px;color:#d9d9d9;letter-spacing:-0.1px">100 % Normal<br>Layer 18</div>
<div class="a" style="left:1669px;top:1084px;width:25px;height:37px;background:#3d3d3d"></div>
<div class="a" style="left:1695px;top:1084px;width:22px;height:37px;background:#3d3d3d"></div>
<div class="a" style="left:1718px;top:1084px;width:261px;height:37px;background:#3d3d3d"></div>
<svg style="left:1669px;top:1084px" width="100" height="37"><path d="M4.5 20.5 Q3.5 17 7 15 Q12.5 11.5 18 15 Q21.5 17 20.5 20.5" stroke="#bdbdbd" stroke-width="1.5" fill="none"/><circle cx="12.5" cy="18.5" r="3.8" fill="#bdbdbd"/><rect x="31" y="11.5" width="14" height="13" rx="2.5" fill="none" stroke="#333" stroke-width="1.2"/><rect x="58" y="5.5" width="34" height="27" fill="url(#tc)" stroke="#222" stroke-width="1.2"/></svg>
<div class="t" style="left:1771px;top:1088.5px;font-size:13px;line-height:15px;color:#d9d9d9;letter-spacing:-0.1px">100 % Normal<br>hair la</div>
<div class="a" style="left:1669px;top:1122px;width:25px;height:37px;background:#3d3d3d"></div>
<div class="a" style="left:1695px;top:1122px;width:22px;height:37px;background:#3d3d3d"></div>
<div class="a" style="left:1718px;top:1122px;width:261px;height:37px;background:#3d3d3d"></div>
<svg style="left:1669px;top:1122px" width="100" height="37"><path d="M4.5 20.5 Q3.5 17 7 15 Q12.5 11.5 18 15 Q21.5 17 20.5 20.5" stroke="#bdbdbd" stroke-width="1.5" fill="none"/><circle cx="12.5" cy="18.5" r="3.8" fill="#bdbdbd"/><rect x="31" y="11.5" width="14" height="13" rx="2.5" fill="none" stroke="#333" stroke-width="1.2"/><rect x="58" y="5.5" width="34" height="27" fill="url(#tc)" stroke="#222" stroke-width="1.2"/></svg>
<div class="t" style="left:1771px;top:1126.5px;font-size:13px;line-height:15px;color:#d9d9d9;letter-spacing:-0.1px">100 % Normal<br>head la</div>
<div class="a" style="left:1669px;top:1160px;width:25px;height:37px;background:#3d3d3d"></div>
<div class="a" style="left:1695px;top:1160px;width:22px;height:37px;background:#3d3d3d"></div>
<div class="a" style="left:1718px;top:1160px;width:261px;height:37px;background:#3d3d3d"></div>
<svg style="left:1669px;top:1160px" width="100" height="37"><path d="M4.5 20.5 Q3.5 17 7 15 Q12.5 11.5 18 15 Q21.5 17 20.5 20.5" stroke="#bdbdbd" stroke-width="1.5" fill="none"/><circle cx="12.5" cy="18.5" r="3.8" fill="#bdbdbd"/><rect x="31" y="11.5" width="14" height="13" rx="2.5" fill="none" stroke="#333" stroke-width="1.2"/><rect x="58" y="5.5" width="34" height="27" fill="url(#tc)" stroke="#222" stroke-width="1.2"/></svg>
<div class="t" style="left:1771px;top:1164.5px;font-size:13px;line-height:15px;color:#d9d9d9;letter-spacing:-0.1px">100 % Normal<br>Layer 17</div>
<div class="a" style="left:1669px;top:1198px;width:25px;height:37px;background:#3d3d3d"></div>
<div class="a" style="left:1695px;top:1198px;width:22px;height:37px;background:#3d3d3d"></div>
<div class="a" style="left:1718px;top:1198px;width:261px;height:37px;background:#3d3d3d"></div>
<svg style="left:1669px;top:1198px" width="100" height="37"><rect x="5.5" y="11.5" width="14" height="13" rx="2.5" fill="none" stroke="#333" stroke-width="1.2"/><rect x="31" y="11.5" width="14" height="13" rx="2.5" fill="none" stroke="#333" stroke-width="1.2"/><rect x="58" y="5.5" width="34" height="27" fill="url(#tc)" stroke="#222" stroke-width="1.2"/></svg>
<div class="t" style="left:1771px;top:1202.5px;font-size:13px;line-height:15px;color:#d9d9d9;letter-spacing:-0.1px">100 % Normal<br>Layer 14</div>
<div class="a" style="left:1669px;top:1236px;width:25px;height:37px;background:#3d3d3d"></div>
<div class="a" style="left:1695px;top:1236px;width:22px;height:37px;background:#3d3d3d"></div>
<div class="a" style="left:1718px;top:1236px;width:261px;height:37px;background:#3d3d3d"></div>
<svg style="left:1669px;top:1236px" width="100" height="37"><path d="M4.5 20.5 Q3.5 17 7 15 Q12.5 11.5 18 15 Q21.5 17 20.5 20.5" stroke="#bdbdbd" stroke-width="1.5" fill="none"/><circle cx="12.5" cy="18.5" r="3.8" fill="#bdbdbd"/><rect x="31" y="11.5" width="14" height="13" rx="2.5" fill="none" stroke="#333" stroke-width="1.2"/><rect x="58" y="5.5" width="34" height="27" fill="url(#tc)" stroke="#222" stroke-width="1.2"/></svg>
<div class="t" style="left:1771px;top:1240.5px;font-size:13px;line-height:15px;color:#d9d9d9;letter-spacing:-0.1px">100 % Normal<br>Layer 16</div>
<!-- end layer panel -->
</body></html>
